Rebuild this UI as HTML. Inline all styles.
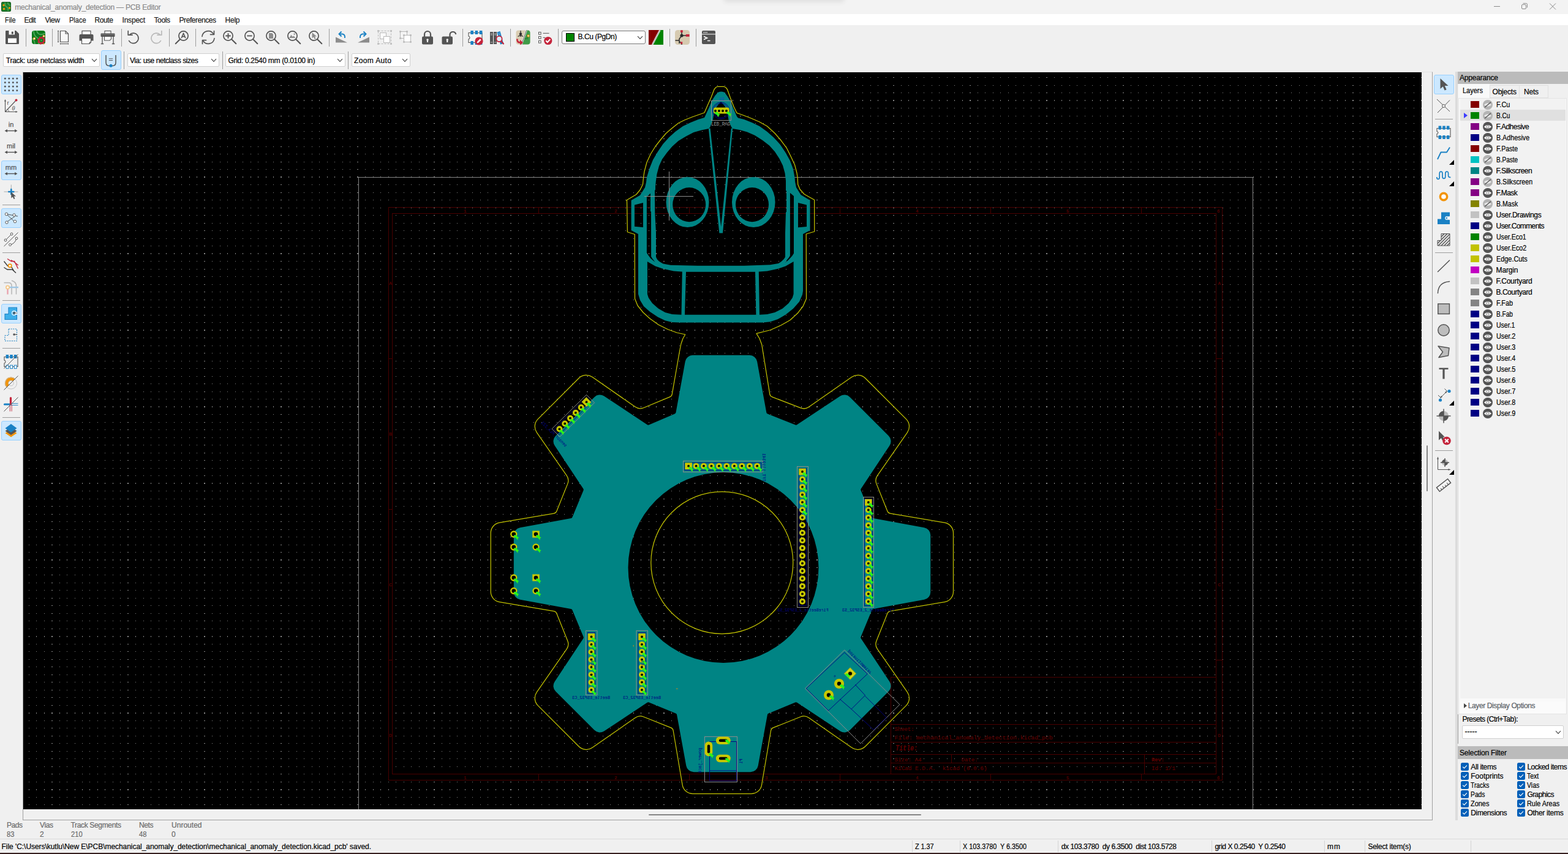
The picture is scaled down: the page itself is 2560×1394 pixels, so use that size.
<!DOCTYPE html>
<html lang="en"><head><meta charset="utf-8"><title>mechanical_anomaly_detection — PCB Editor</title>
<style>html,body{margin:0;padding:0;background:#f0f0f0}
body{width:2560px;height:1394px;overflow:hidden;position:relative;font-family:"Liberation Sans",sans-serif;font-size:12px}
.t{position:absolute;white-space:nowrap;line-height:1;height:1em;-webkit-text-stroke:0.2px}
.r,.ic,.cb,.sel{position:absolute}
.cb{background:#fff;border:1px solid #d0d0d0;border-radius:2px}
.sel{background:#cce8ff;border:1px solid #99d1ff;border-radius:3px}
svg{display:block;overflow:visible}
#cv{position:absolute;left:38px;top:118px;overflow:hidden;width:2283px;height:1203px;background:#000}
</style></head><body>
<div class="r" style="left:0px;top:0px;width:2560px;height:23px;background:#f3f3f3;"></div>
<div class="r" style="left:0px;top:23px;width:2560px;height:18px;background:#ffffff;"></div>
<div class="r" style="left:0px;top:41px;width:2560px;height:1351px;background:#f0f0f0;"></div>
<div class="r" style="left:0px;top:1391px;width:2560px;height:1px;background:#fcfdfd;"></div>
<div class="r" style="left:0px;top:1392px;width:2560px;height:1px;background:#3a2424;"></div>
<div class="r" style="left:0px;top:1393px;width:2560px;height:1px;background:#341c1c;"></div>
<div class="r" style="left:1185px;top:-12px;width:190px;height:10px;box-shadow:0 2px 8px 3px rgba(0,0,0,0.09)"></div>
<svg class="ic" style="left:2px;top:3px" width="16" height="16" viewBox="0 0 16 16"><rect x="0" y="0" width="16" height="16" rx="2.5" fill="#0f5a1a"/><rect x="1" y="1" width="14" height="14" rx="2" fill="#1b7f2a"/><path d="M6 1Q6 7 9 8.5T11 15M11 1Q10 4 15 6" fill="none" stroke="#56a95f" stroke-width="1.4"/><circle cx="4" cy="5.5" r="1.7" fill="#f2940a"/><circle cx="4.5" cy="11.5" r="1.7" fill="#f2940a"/><circle cx="13.5" cy="10" r="1.7" fill="#f2940a"/></svg>
<div class="t" style="left:24.30px;top:5.84px;font-size:12px;color:#8a8a8a;letter-spacing:-0.198px;">mechanical_anomaly_detection — PCB Editor</div>
<svg class="ic" style="left:2430px;top:0" width="130" height="23" viewBox="2430 0 130 23"><path d="M2439 10.5H2449" stroke="#8a8a8a" stroke-width="1"/><rect x="2484.5" y="7.5" width="7" height="7" rx="1.5" fill="none" stroke="#8a8a8a" stroke-width="1"/><path d="M2486.5 5.5H2491.5Q2493.5 5.5 2493.5 7.5V12.5" fill="none" stroke="#8a8a8a" stroke-width="1"/><path d="M2530 5.5L2540 15.5M2540 5.5L2530 15.5" stroke="#8a8a8a" stroke-width="1"/></svg>
<div class="t" style="left:7.50px;top:26.84px;font-size:12px;color:#1b1b1b;transform:scaleX(0.9051);transform-origin:0 0;">File</div>
<div class="t" style="left:39.50px;top:26.84px;font-size:12px;color:#1b1b1b;letter-spacing:-0.559px;">Edit</div>
<div class="t" style="left:73.50px;top:26.84px;font-size:12px;color:#1b1b1b;letter-spacing:-0.431px;">View</div>
<div class="t" style="left:112.50px;top:26.84px;font-size:12px;color:#1b1b1b;transform:scaleX(0.9161);transform-origin:0 0;">Place</div>
<div class="t" style="left:154.50px;top:26.84px;font-size:12px;color:#1b1b1b;letter-spacing:-0.380px;">Route</div>
<div class="t" style="left:199.50px;top:26.84px;font-size:12px;color:#1b1b1b;letter-spacing:-0.198px;">Inspect</div>
<div class="t" style="left:251.50px;top:26.84px;font-size:12px;color:#1b1b1b;letter-spacing:-0.378px;">Tools</div>
<div class="t" style="left:292.50px;top:26.84px;font-size:12px;color:#1b1b1b;letter-spacing:-0.420px;">Preferences</div>
<div class="t" style="left:367.50px;top:26.84px;font-size:12px;color:#1b1b1b;letter-spacing:-0.226px;">Help</div>
<svg class="ic" style="left:8px;top:49px" width="24" height="24" viewBox="0 0 24 24"><path d="M1 2.2Q1 1 2.2 1H18L23 6V21.8Q23 23 21.8 23H2.2Q1 23 1 21.8Z" fill="#545454"/><rect x="5" y="13.5" width="14" height="7.5" fill="#fff"/><rect x="6.5" y="1" width="9.5" height="6.5" fill="#fff"/><rect x="10.8" y="2.6" width="3" height="4" fill="#545454"/></svg>
<svg class="ic" style="left:51px;top:49px" width="24" height="24" viewBox="0 0 24 24"><rect x="1" y="1" width="22" height="22" rx="4" fill="#0c7a1c"/><path d="M4 1Q4 9 9 12T12 23M9 1Q10 6 14 7T23 5M1 14Q5 15 6 23" fill="none" stroke="#4da85a" stroke-width="1.8"/><circle cx="5" cy="14" r="1.8" fill="#fff" stroke="#f2940a" stroke-width="1"/><circle cx="20.5" cy="10" r="1.6" fill="#fff" stroke="#f2940a" stroke-width="1"/><circle cx="16.5" cy="17" r="4.2" fill="none" stroke="#c4243b" stroke-width="2.6"/><circle cx="16.5" cy="17" r="5.6" fill="none" stroke="#c4243b" stroke-width="2.2" stroke-dasharray="2.2 2.2"/><circle cx="16.5" cy="17" r="1.6" fill="#2ea043"/><circle cx="20.5" cy="22.5" r="1" fill="#f2940a"/></svg>
<svg class="ic" style="left:93px;top:49px" width="24" height="24" viewBox="0 0 24 24"><path d="M5.5 1.5H14L18.5 6V19.5H5.5Z" fill="#f7f7f7" stroke="#545454" stroke-width="1.2"/><path d="M14 1.5V6H18.5" fill="none" stroke="#545454" stroke-width="1.2"/><path d="M2 1.5V19.5M1 1.5H3M1 19.5H3M5.5 22.5H18.5M5.5 21.5V23.5M18.5 21.5V23.5" stroke="#545454" stroke-width="1" fill="none"/></svg>
<svg class="ic" style="left:129px;top:49px" width="24" height="24" viewBox="0 0 24 24"><rect x="5" y="1.5" width="14" height="7" fill="#fafafa" stroke="#545454" stroke-width="1.2"/><path d="M0.5 9Q0.5 7 2.5 7H21.5Q23.5 7 23.5 9V17.5H0.5Z" fill="#545454"/><path d="M4.5 13.5H19.5V20L17 22.5H4.5Z" fill="#fafafa" stroke="#545454" stroke-width="1.2"/><path d="M19.5 20H17V22.5" fill="none" stroke="#545454" stroke-width="1"/></svg>
<svg class="ic" style="left:164px;top:49px" width="24" height="24" viewBox="0 0 24 24"><rect x="7" y="1.5" width="10" height="6" fill="#fafafa" stroke="#545454" stroke-width="1.1"/><rect x="0.5" y="5.5" width="23" height="5.5" rx="1" fill="#545454"/><path d="M1 7.6H23" stroke="#8a8a8a" stroke-width="0.7"/><path d="M6.5 11V17H15L17.5 14.8V11" fill="#fafafa" stroke="#545454" stroke-width="1.1"/><path d="M3 11V22.5M21 11V22.5M0.8 22.5H5.2M18.8 22.5H23.2" stroke="#545454" stroke-width="1.3" fill="none"/></svg>
<svg class="ic" style="left:206px;top:49px" width="24" height="24" viewBox="0 0 24 24"><path d="M6.2 7.2A8.3 8.3 0 1 1 4.6 17.6" fill="none" stroke="#545454" stroke-width="1.7" stroke-linecap="round"/><path d="M3.2 1.5V8.2H10" fill="none" stroke="#545454" stroke-width="1.7" stroke-linecap="round" stroke-linejoin="round"/></svg>
<svg class="ic" style="left:243px;top:49px" width="24" height="24" viewBox="0 0 24 24"><path d="M17.8 7.2A8.3 8.3 0 1 0 19.4 17.6" fill="none" stroke="#b9b9b9" stroke-width="1.7" stroke-linecap="round"/><path d="M20.8 1.5V8.2H14" fill="none" stroke="#b9b9b9" stroke-width="1.7" stroke-linecap="round" stroke-linejoin="round"/></svg>
<svg class="ic" style="left:285px;top:49px" width="24" height="24" viewBox="0 0 24 24"><circle cx="14.5" cy="9.5" r="7.6" fill="none" stroke="#545454" stroke-width="1.7"/><path d="M9 15L1.7 22.3" stroke="#545454" stroke-width="2" stroke-linecap="round"/><path d="M11.2 13.2L14.5 5.2L17.8 13.2M12.4 10.6H16.6" fill="none" stroke="#545454" stroke-width="1.6" stroke-linejoin="round"/></svg>
<svg class="ic" style="left:328px;top:49px" width="24" height="24" viewBox="0 0 24 24"><path d="M2 10.5A10 10 0 0 1 20.5 6.5" fill="none" stroke="#545454" stroke-width="1.7" stroke-linecap="round"/><path d="M22 13.5A10 10 0 0 1 3.5 17.5" fill="none" stroke="#545454" stroke-width="1.7" stroke-linecap="round"/><path d="M21.5 1.5V7.3H15.5M2.5 22.5V16.7H8.5" fill="none" stroke="#545454" stroke-width="1.7" stroke-linecap="round" stroke-linejoin="round"/></svg>
<svg class="ic" style="left:363px;top:49px" width="24" height="24" viewBox="0 0 24 24"><circle cx="9.5" cy="9.5" r="7.6" fill="none" stroke="#545454" stroke-width="1.7"/><path d="M15 15L22.3 22.3" stroke="#545454" stroke-width="2" stroke-linecap="round"/><path d="M5.3 9.5H13.7M9.5 5.3V13.7" stroke="#545454" stroke-width="1.8"/></svg>
<svg class="ic" style="left:398px;top:49px" width="24" height="24" viewBox="0 0 24 24"><circle cx="9.5" cy="9.5" r="7.6" fill="none" stroke="#545454" stroke-width="1.7"/><path d="M15 15L22.3 22.3" stroke="#545454" stroke-width="2" stroke-linecap="round"/><path d="M5.3 9.5H13.7" stroke="#545454" stroke-width="1.8"/></svg>
<svg class="ic" style="left:433px;top:49px" width="24" height="24" viewBox="0 0 24 24"><circle cx="9.5" cy="9.5" r="7.6" fill="none" stroke="#545454" stroke-width="1.7"/><path d="M15 15L22.3 22.3" stroke="#545454" stroke-width="2" stroke-linecap="round"/><path d="M6 5H11L13 7V14H6Z" fill="#8c8c8c"/></svg>
<svg class="ic" style="left:468px;top:49px" width="24" height="24" viewBox="0 0 24 24"><circle cx="9.5" cy="9.5" r="7.6" fill="none" stroke="#545454" stroke-width="1.7"/><path d="M15 15L22.3 22.3" stroke="#545454" stroke-width="2" stroke-linecap="round"/><path d="M4 13L7.5 8L9.8 11L11.5 9.5L14.5 13Z" fill="#8c8c8c"/><circle cx="12.7" cy="6.6" r="1.2" fill="#8c8c8c"/></svg>
<svg class="ic" style="left:503px;top:49px" width="24" height="24" viewBox="0 0 24 24"><circle cx="9.5" cy="9.5" r="7.6" fill="none" stroke="#545454" stroke-width="1.7"/><path d="M15 15L22.3 22.3" stroke="#545454" stroke-width="2" stroke-linecap="round"/><path d="M6.5 4V13.5L9 11.3L10.8 15L12.6 14.2L10.9 10.6H14Z" fill="#8c8c8c"/></svg>
<svg class="ic" style="left:546px;top:49px" width="24" height="24" viewBox="0 0 24 24"><path d="M2 11.5L21 20.5H2Z" fill="#8c8c8c"/><path d="M8 6.5H13Q17.5 7 17 13" fill="none" stroke="#1a81c4" stroke-width="1.9"/><path d="M11.5 2.5L7.5 6.5L11.5 10.5" fill="none" stroke="#1a81c4" stroke-width="1.9"/></svg>
<svg class="ic" style="left:581px;top:49px" width="24" height="24" viewBox="0 0 24 24"><path d="M22 11.5L3 20.5H22Z" fill="#8c8c8c"/><path d="M16 6.5H11Q6.5 7 7 13" fill="none" stroke="#1a81c4" stroke-width="1.9"/><path d="M12.5 2.5L16.5 6.5L12.5 10.5" fill="none" stroke="#1a81c4" stroke-width="1.9"/></svg>
<svg class="ic" style="left:616px;top:49px" width="24" height="24" viewBox="0 0 24 24"><rect x="1.5" y="1.5" width="21" height="21" fill="none" stroke="#b9b9b9" stroke-width="1" stroke-dasharray="3 2"/><rect x="0.19999999999999996" y="0.19999999999999996" width="2.6" height="2.6" fill="#b9b9b9"/><rect x="21.2" y="0.19999999999999996" width="2.6" height="2.6" fill="#b9b9b9"/><rect x="0.19999999999999996" y="21.2" width="2.6" height="2.6" fill="#b9b9b9"/><rect x="21.2" y="21.2" width="2.6" height="2.6" fill="#b9b9b9"/><rect x="4.5" y="4.5" width="10" height="10" fill="#fafafa" stroke="#b9b9b9" stroke-width="1"/><rect x="10.5" y="10.5" width="10" height="10" fill="#fff" stroke="#b9b9b9" stroke-width="1"/></svg>
<svg class="ic" style="left:651px;top:49px" width="24" height="24" viewBox="0 0 24 24"><rect x="2.5" y="2.5" width="11" height="11" fill="#f4f4f4" stroke="#b9b9b9" stroke-width="1"/><rect x="1.2" y="1.2" width="2.6" height="2.6" fill="#b9b9b9"/><rect x="12.2" y="1.2" width="2.6" height="2.6" fill="#b9b9b9"/><rect x="1.2" y="12.2" width="2.6" height="2.6" fill="#b9b9b9"/><rect x="8.5" y="8.5" width="11" height="11" fill="#fff" stroke="#b9b9b9" stroke-width="1"/><rect x="7.2" y="7.2" width="2.6" height="2.6" fill="#b9b9b9"/><rect x="18.2" y="7.2" width="2.6" height="2.6" fill="#b9b9b9"/><rect x="7.2" y="18.2" width="2.6" height="2.6" fill="#b9b9b9"/><rect x="18.2" y="18.2" width="2.6" height="2.6" fill="#b9b9b9"/></svg>
<svg class="ic" style="left:686px;top:49px" width="24" height="24" viewBox="0 0 24 24"><path d="M7 11V7A5 5 0 0 1 17 7V11" fill="none" stroke="#545454" stroke-width="2.2"/><rect x="3" y="10.5" width="18" height="13" rx="2" fill="#545454"/><circle cx="12" cy="16" r="1.7" fill="#fff"/><path d="M11.2 16.5H12.8L13.2 20H10.8Z" fill="#fff"/></svg>
<svg class="ic" style="left:721px;top:49px" width="24" height="24" viewBox="0 0 24 24"><path d="M13.5 11V7A5 5 0 0 1 23.3 7" fill="none" stroke="#545454" stroke-width="2.2"/><rect x="0.5" y="10.5" width="17.5" height="13" rx="2" fill="#545454"/><circle cx="9.3" cy="16" r="1.7" fill="#fff"/><path d="M8.5 16.5H10.1L10.5 20H8.1Z" fill="#fff"/></svg>
<svg class="ic" style="left:764px;top:49px" width="24" height="24" viewBox="0 0 24 24"><path d="M1 4.5H23V20.5H1V15Q3 14.5 3 12.5T1 10Z" fill="#f6f6f6" stroke="#545454" stroke-width="1.1"/><rect x="4.3" y="1" width="4.6" height="6" fill="#1a81c4"/><rect x="4.3" y="18" width="4.6" height="6" fill="#1a81c4"/><rect x="11.6" y="1" width="4.6" height="6" fill="#1a81c4"/><rect x="11.6" y="18" width="4.6" height="6" fill="#1a81c4"/><rect x="18.799999999999997" y="1" width="4.6" height="6" fill="#1a81c4"/><rect x="18.799999999999997" y="18" width="4.6" height="6" fill="#1a81c4"/><circle cx="18" cy="18" r="6.6" fill="#c4243b"/><path d="M14.5 21.5L15.3 18.8L19.8 14.3L21.7 16.2L17.2 20.7Z" fill="#fff"/></svg>
<svg class="ic" style="left:799px;top:49px" width="24" height="24" viewBox="0 0 24 24"><rect x="1" y="3" width="5" height="20" fill="#545454"/><rect x="7" y="3" width="5" height="20" fill="#545454"/><path d="M2 6H5M2 8H5M8 6H11M8 8H11M2 20H5M8 20H11" stroke="#d0d0d0" stroke-width="0.8"/><path d="M12.5 3.5L17.5 2L23 22L18 23.5Z" fill="#1a81c4"/><path d="M14.5 5.5L17 4.8M15 8L17.6 7.3" stroke="#9cc9ea" stroke-width="0.9"/><circle cx="16" cy="14.5" r="4.6" fill="#dfeffa" stroke="#c4243b" stroke-width="1.8"/><path d="M19.5 18.5L23 22.5" stroke="#c4243b" stroke-width="2.2" stroke-linecap="round"/></svg>
<svg class="ic" style="left:842px;top:49px" width="24" height="24" viewBox="0 0 24 24"><rect x="0.5" y="0.5" width="23" height="23" rx="4" fill="#d9cdb2"/><path d="M17.5 0.5H19.5Q23.5 0.5 23.5 4.5V19.5Q23.5 23.5 19.5 23.5H9.5Z" fill="#3f9b48"/><path d="M14 14H19V8" fill="none" stroke="#2b7d33" stroke-width="1.5"/><path d="M17.5 0.5L9.5 23.5" stroke="#fff" stroke-width="2.4"/><path d="M17.5 0.5L9.5 23.5" stroke="#333" stroke-width="0.9"/><circle cx="8" cy="6.5" r="2.2" fill="#2e2e2e"/><path d="M8 1V11M3.5 10.5L8 8.5L12 10.5" fill="none" stroke="#2e2e2e" stroke-width="1.3"/><circle cx="20.5" cy="9.5" r="1.6" fill="#fff" stroke="#f2940a" stroke-width="1.2"/><path d="M2.5 14.5Q1.5 20.5 8 20.5" fill="none" stroke="#c4243b" stroke-width="2.6"/><path d="M7 16L12 20.5L7 24.5Z" fill="#c4243b"/></svg>
<svg class="ic" style="left:878px;top:49px" width="24" height="24" viewBox="0 0 24 24"><rect x="1.5" y="3.5" width="3.6" height="3.6" fill="#fff" stroke="#545454" stroke-width="1"/><rect x="1.5" y="10.5" width="3.6" height="3.6" fill="#fff" stroke="#545454" stroke-width="1"/><rect x="1.5" y="17.5" width="3.6" height="3.6" fill="#fff" stroke="#545454" stroke-width="1"/><path d="M8.5 5.3H18.5M8.5 12.3H12" stroke="#545454" stroke-width="1"/><circle cx="16.8" cy="17.5" r="6.6" fill="#c4243b"/><path d="M13.2 17.3L15.8 20L20.3 15" fill="none" stroke="#fff" stroke-width="2"/></svg>
<svg class="ic" style="left:1059px;top:49px" width="24" height="24" viewBox="0 0 24 24"><rect x="0" y="0" width="24" height="24" fill="#840000"/><path d="M19 0H24V24H7Z" fill="#008400"/><path d="M18.5 0L6 24" stroke="#fff" stroke-width="2.6"/><path d="M18.5 0L6 24" stroke="#222" stroke-width="0.9" stroke-dasharray="1.5 1"/></svg>
<svg class="ic" style="left:1102px;top:49px" width="24" height="24" viewBox="0 0 24 24"><rect x="0" y="0" width="24" height="24" rx="4.5" fill="#d6cab0"/><circle cx="11" cy="9" r="2.6" fill="#2b2b2b"/><path d="M11 2V10.5M11 9H20M10.5 10L7 14.5V22M0.5 17H7M7 18.5L11 22V24" fill="none" stroke="#2b2b2b" stroke-width="1.5"/><rect x="9" y="0.3" width="3.8" height="3.6" fill="#c4243b"/><rect x="17.8" y="7" width="5.8" height="3.8" fill="#c4243b"/><rect x="9.2" y="19.3" width="3" height="3.4" fill="#c4243b"/></svg>
<svg class="ic" style="left:1145px;top:49px" width="24" height="24" viewBox="0 0 24 24"><rect x="1" y="1" width="22" height="22" rx="2" fill="#545454"/><path d="M1 6.8H23" stroke="#fff" stroke-width="1"/><path d="M3.5 3.8H10.5" stroke="#fff" stroke-width="1.3" stroke-dasharray="1.6 0.8"/><path d="M4 10.5L9.5 13L4 15.5" fill="none" stroke="#fff" stroke-width="1.6"/><path d="M10 17.5H14.5" stroke="#fff" stroke-width="1.5"/></svg>
<div class="r" style="left:42.0px;top:47px;width:1px;height:29px;background:#9d9d9d"></div>
<div class="r" style="left:85.0px;top:47px;width:1px;height:29px;background:#9d9d9d"></div>
<div class="r" style="left:198.0px;top:47px;width:1px;height:29px;background:#9d9d9d"></div>
<div class="r" style="left:276.0px;top:47px;width:1px;height:29px;background:#9d9d9d"></div>
<div class="r" style="left:319.0px;top:47px;width:1px;height:29px;background:#9d9d9d"></div>
<div class="r" style="left:537.0px;top:47px;width:1px;height:29px;background:#9d9d9d"></div>
<div class="r" style="left:755.0px;top:47px;width:1px;height:29px;background:#9d9d9d"></div>
<div class="r" style="left:832.5px;top:47px;width:1px;height:29px;background:#9d9d9d"></div>
<div class="r" style="left:911.0px;top:47px;width:1px;height:29px;background:#9d9d9d"></div>
<div class="r" style="left:1093.0px;top:47px;width:1px;height:29px;background:#9d9d9d"></div>
<div class="r" style="left:1136.0px;top:47px;width:1px;height:29px;background:#9d9d9d"></div>
<div class="cb" style="left:917px;top:50px;width:135px;height:20px;border-color:#7a7a7a;border-radius:3px"></div>
<div class="r" style="left:924px;top:54px;width:14px;height:14px;background:#008400;border:1px solid #000;box-sizing:border-box"></div>
<div class="t" style="left:943.50px;top:54.04px;font-size:12px;color:#000;letter-spacing:-0.422px;">B.Cu (PgDn)</div>
<svg class="ic" style="left:1040px;top:58.0px" width="10" height="7" viewBox="0 0 10 7"><path d="M1 1.2L5 5.4L9 1.2" fill="none" stroke="#444" stroke-width="1.1"/></svg>
<div class="cb" style="left:5px;top:87px;width:155.5px;height:20px;border-color:#d0d0d0"></div><div class="t" style="left:9.80px;top:92.94px;font-size:12px;color:#000;letter-spacing:-0.274px;">Track: use netclass width</div><svg class="ic" style="left:148.8px;top:95.0px" width="10" height="7" viewBox="0 0 10 7"><path d="M1 1.2L5 5.4L9 1.2" fill="none" stroke="#444" stroke-width="1.1"/></svg>
<div class="sel" style="left:165px;top:82px;width:31px;height:30px"></div>
<svg class="ic" style="left:169px;top:86px" width="24" height="24" viewBox="0 0 24 24"><path d="M4 4V16Q4 21.5 9.5 21.5H14.5Q20 21.5 20 16V4" fill="none" stroke="#545454" stroke-width="1.5"/><path d="M8.8 9.8H15.2M8.8 12.6H15.2" stroke="#545454" stroke-width="1"/><circle cx="12" cy="21.3" r="2.5" fill="#1a81c4"/></svg>
<div class="r" style="left:202.0px;top:84px;width:1px;height:29px;background:#9d9d9d"></div>
<div class="cb" style="left:208px;top:87px;width:147.5px;height:20px;border-color:#d0d0d0"></div><div class="t" style="left:212.00px;top:92.94px;font-size:12px;color:#000;letter-spacing:-0.426px;">Via: use netclass sizes</div><svg class="ic" style="left:344px;top:95.0px" width="10" height="7" viewBox="0 0 10 7"><path d="M1 1.2L5 5.4L9 1.2" fill="none" stroke="#444" stroke-width="1.1"/></svg>
<div class="r" style="left:362.5px;top:84px;width:1px;height:29px;background:#9d9d9d"></div>
<div class="cb" style="left:368px;top:87px;width:194px;height:20px;border-color:#d0d0d0"></div><div class="t" style="left:372.50px;top:92.94px;font-size:12px;color:#000;letter-spacing:-0.314px;">Grid: 0.2540 mm (0.0100 in)</div><svg class="ic" style="left:550px;top:95.0px" width="10" height="7" viewBox="0 0 10 7"><path d="M1 1.2L5 5.4L9 1.2" fill="none" stroke="#444" stroke-width="1.1"/></svg>
<div class="r" style="left:568.0px;top:84px;width:1px;height:29px;background:#9d9d9d"></div>
<div class="cb" style="left:574px;top:87px;width:93.5px;height:20px;border-color:#d0d0d0"></div><div class="t" style="left:578.00px;top:92.94px;font-size:12px;color:#000;letter-spacing:0.371px;">Zoom Auto</div><svg class="ic" style="left:655.5px;top:95.0px" width="10" height="7" viewBox="0 0 10 7"><path d="M1 1.2L5 5.4L9 1.2" fill="none" stroke="#444" stroke-width="1.1"/></svg>
<div class="r" style="left:37px;top:117px;width:2302px;height:1222px;background:#f0f0f0;border:1px solid #a0a0a0;box-sizing:border-box;border-top-color:#e3e3e3;border-left-color:#a0a0a0"></div>
<div class="r" style="left:1059px;top:1329px;width:445px;height:2px;background:#858585;border-radius:1px"></div>
<div class="r" style="left:2329px;top:727px;width:2px;height:75px;background:#858585;border-radius:1px"></div>
<div class="sel" style="left:2px;top:122px;width:31px;height:30px"></div>
<svg class="ic" style="left:6px;top:126px" width="24" height="24" viewBox="0 0 24 24"><circle cx="2.3" cy="2.3" r="1.45" fill="#545454"/><circle cx="2.3" cy="8.8" r="1.45" fill="#545454"/><circle cx="2.3" cy="15.3" r="1.45" fill="#545454"/><circle cx="2.3" cy="21.8" r="1.45" fill="#545454"/><circle cx="8.8" cy="2.3" r="1.45" fill="#545454"/><circle cx="8.8" cy="8.8" r="1.45" fill="#545454"/><circle cx="8.8" cy="15.3" r="1.45" fill="#545454"/><circle cx="8.8" cy="21.8" r="1.45" fill="#545454"/><circle cx="15.3" cy="2.3" r="1.45" fill="#545454"/><circle cx="15.3" cy="8.8" r="1.45" fill="#545454"/><circle cx="15.3" cy="15.3" r="1.45" fill="#545454"/><circle cx="15.3" cy="21.8" r="1.45" fill="#545454"/><circle cx="21.8" cy="2.3" r="1.45" fill="#545454"/><circle cx="21.8" cy="8.8" r="1.45" fill="#545454"/><circle cx="21.8" cy="15.3" r="1.45" fill="#545454"/><circle cx="21.8" cy="21.8" r="1.45" fill="#545454"/></svg>
<svg class="ic" style="left:6px;top:161px" width="24" height="24" viewBox="0 0 24 24"><path d="M2.5 2V21.5H22" fill="none" stroke="#545454" stroke-width="1.1"/><path d="M2.5 1L1 4.5H4ZM23 21.5L19.5 20V23Z" fill="#545454"/><path d="M2.5 21.5L19.5 3.5" stroke="#545454" stroke-width="1.1"/><path d="M6.5 17.5Q8.5 19 8.5 21.5" fill="none" stroke="#545454" stroke-width="0.8"/><circle cx="20.5" cy="2.5" r="2" fill="#c4243b"/><text x="5.6" y="9.5" font-family="Liberation Sans,sans-serif" font-size="9.5" fill="#545454">r</text><text x="13.5" y="18.5" font-family="Liberation Sans,sans-serif" font-size="9" font-style="italic" fill="#545454">θ</text></svg>
<svg class="ic" style="left:6px;top:196px" width="24" height="24" viewBox="0 0 24 24"><text x="12" y="10.5" text-anchor="middle" font-family="Liberation Sans,sans-serif" font-size="11" fill="#545454" stroke="#545454" stroke-width="0.25">in</text><path d="M3 17.5H21" stroke="#545454" stroke-width="1.4"/><path d="M1.5 17.5L6 15V20ZM22.5 17.5L18 15V20Z" fill="#545454"/></svg>
<svg class="ic" style="left:6px;top:231px" width="24" height="24" viewBox="0 0 24 24"><text x="12" y="10.5" text-anchor="middle" font-family="Liberation Sans,sans-serif" font-size="11" fill="#545454" stroke="#545454" stroke-width="0.25">mil</text><path d="M3 17.5H21" stroke="#545454" stroke-width="1.4"/><path d="M1.5 17.5L6 15V20ZM22.5 17.5L18 15V20Z" fill="#545454"/></svg>
<div class="sel" style="left:2px;top:262px;width:31px;height:30px"></div>
<svg class="ic" style="left:6px;top:266px" width="24" height="24" viewBox="0 0 24 24"><text x="12" y="10.5" text-anchor="middle" font-family="Liberation Sans,sans-serif" font-size="11" fill="#545454" stroke="#545454" stroke-width="0.25">mm</text><path d="M3 17.5H21" stroke="#545454" stroke-width="1.4"/><path d="M1.5 17.5L6 15V20ZM22.5 17.5L18 15V20Z" fill="#545454"/></svg>
<svg class="ic" style="left:6px;top:301px" width="24" height="24" viewBox="0 0 24 24"><path d="M12.3 0.5V9M0.5 12H9M15.5 12H23.5" stroke="#9a9a9a" stroke-width="0.8"/><path d="M12.3 8V16M8.3 12H16.3" stroke="#1a81c4" stroke-width="2.6" stroke-linecap="round"/><path d="M12.3 12.5V22.5L14.8 20.2L16.6 24L18.4 23.2L16.7 19.5H20Z" fill="#545454"/></svg>
<div class="sel" style="left:2px;top:340px;width:31px;height:30px"></div>
<svg class="ic" style="left:6px;top:343.5px" width="24" height="24" viewBox="0 0 24 24"><path d="M4.5 5.5L19 19M4 19L18 9.5M4.5 5.5L23 9" fill="none" stroke="#545454" stroke-width="1"/><circle cx="4.5" cy="5.5" r="2.2" fill="#fff" stroke="#545454" stroke-width="1"/><circle cx="17" cy="7" r="2.2" fill="#fff" stroke="#545454" stroke-width="1"/><circle cx="5" cy="19" r="2.2" fill="#fff" stroke="#545454" stroke-width="1"/><circle cx="18.5" cy="17.5" r="2.2" fill="#fff" stroke="#545454" stroke-width="1"/></svg>
<svg class="ic" style="left:6px;top:378.5px" width="24" height="24" viewBox="0 0 24 24"><path d="M0.5 23L23.5 0.5" stroke="#545454" stroke-width="1"/><path d="M3 13L13 3M10.5 20.5Q18.5 19 21 10" fill="none" stroke="#545454" stroke-width="1"/><circle cx="3" cy="13" r="1.9" fill="#fff" stroke="#545454" stroke-width="1"/><circle cx="13" cy="3" r="1.9" fill="#fff" stroke="#545454" stroke-width="1"/><circle cx="10.5" cy="20.5" r="1.9" fill="#fff" stroke="#545454" stroke-width="1"/><circle cx="21" cy="10" r="1.9" fill="#fff" stroke="#545454" stroke-width="1"/></svg>
<svg class="ic" style="left:6px;top:422px" width="24" height="24" viewBox="0 0 24 24"><path d="M6 0.5L12.5 4.5H17.5L23.5 16.5M12 2.5L17 5.5L23.8 11" fill="none" stroke="#c4243b" stroke-width="1.4"/><path d="M0.5 4.5L6.5 12H11.5L17.5 21.5M0.5 14.5L6 18H14L20 23.5" fill="none" stroke="#3a3a3a" stroke-width="1.4"/><circle cx="10.2" cy="11.8" r="2.6" fill="#fff" stroke="#f2940a" stroke-width="1.7"/></svg>
<svg class="ic" style="left:6px;top:457px" width="24" height="24" viewBox="0 0 24 24"><path d="M0.5 4.5H8Q13 4.5 13 9.5V23.5M13 1Q20.5 3 20.5 10V23.5" fill="none" stroke="#b5b5b5" stroke-width="1.5"/><path d="M7 12H24" stroke="#9fc6e4" stroke-width="2.4"/><path d="M6.5 13V23.5" stroke="#e8a3ae" stroke-width="2.4"/><circle cx="6.5" cy="12" r="2.6" fill="#fff" stroke="#f6c886" stroke-width="1.7"/></svg>
<div class="sel" style="left:2px;top:496px;width:31px;height:30px"></div>
<svg class="ic" style="left:6px;top:500px" width="24" height="24" viewBox="0 0 24 24"><path d="M8 2H21.5V8.5Q17 8.3 16.7 11.5Q17 14.7 21.5 14.5V21.5H2V12.5H8Z" fill="#3daee9" stroke="#1a81c4" stroke-width="1.1"/><circle cx="17" cy="11" r="1.8" fill="#545454"/><path d="M17 11H22" stroke="#545454" stroke-width="1.6"/><circle cx="17" cy="11" r="3.4" fill="none" stroke="#fff" stroke-width="1.1"/></svg>
<svg class="ic" style="left:6px;top:535px" width="24" height="24" viewBox="0 0 24 24"><path d="M8 2H21.5V21.5H2V12.5H8Z" fill="none" stroke="#1a81c4" stroke-width="1.1" stroke-dasharray="2 1.6"/><circle cx="17" cy="11" r="1.7" fill="#545454"/><path d="M17 11H22" stroke="#545454" stroke-width="1.3"/></svg>
<svg class="ic" style="left:6px;top:578px" width="24" height="24" viewBox="0 0 24 24"><path d="M1 4.5H23V20.5H1V15Q3 14.5 3 12.5T1 10Z" fill="none" stroke="#545454" stroke-width="1.1"/><rect x="3.6" y="1" width="4.6" height="6" fill="#1a81c4"/><rect x="4.1" y="18.2" width="3.8" height="5.4" fill="#fff" stroke="#1a81c4" stroke-width="1"/><rect x="10.2" y="1" width="4.6" height="6" fill="#1a81c4"/><rect x="10.7" y="18.2" width="3.8" height="5.4" fill="#fff" stroke="#1a81c4" stroke-width="1"/><rect x="16.8" y="1" width="4.6" height="6" fill="#1a81c4"/><rect x="17.3" y="18.2" width="3.8" height="5.4" fill="#fff" stroke="#1a81c4" stroke-width="1"/><path d="M0.5 23.5L23.5 0.5" stroke="#545454" stroke-width="1"/></svg>
<svg class="ic" style="left:6px;top:613px" width="24" height="24" viewBox="0 0 24 24"><path d="M12 2.5A10 10 0 0 0 4.9 19.6L9 15.5A4.2 4.2 0 0 1 12 8.3A4.2 4.2 0 0 1 15 9.5L19.1 5.4A10 10 0 0 0 12 2.5Z" fill="#f2940a"/><circle cx="12" cy="12.5" r="9.5" fill="none" stroke="#bdbdbd" stroke-width="0.9"/><circle cx="12" cy="12.5" r="4.3" fill="none" stroke="#bdbdbd" stroke-width="0.9"/><path d="M0.5 23.5L23.5 0.5" stroke="#545454" stroke-width="1"/></svg>
<svg class="ic" style="left:6px;top:648px" width="24" height="24" viewBox="0 0 24 24"><path d="M1.5 12H11" stroke="#1a81c4" stroke-width="3.2" stroke-linecap="round"/><path d="M11.5 1.5V11" stroke="#c4243b" stroke-width="3.2" stroke-linecap="round"/><path d="M12 10.6H23.5M12 13.4H23.5" stroke="#1a81c4" stroke-width="0.9"/><path d="M10.3 12V23.5M13.1 12V23.5" stroke="#c4243b" stroke-width="0.9"/><path d="M0.5 23.5L23.5 0.5" stroke="#545454" stroke-width="1"/></svg>
<div class="sel" style="left:2px;top:687px;width:31px;height:30px"></div>
<svg class="ic" style="left:6px;top:691px" width="24" height="24" viewBox="0 0 24 24"><path d="M12 9.5L21.5 16L12 22.5L2.5 16Z" fill="#f2940a"/><path d="M12 6L21.5 12.5L12 19L2.5 12.5Z" fill="#545454"/><path d="M12 1L21.5 8L12 15L2.5 8Z" fill="#1a81c4"/></svg>
<div class="r" style="left:4px;top:333.5px;width:29px;height:1px;background:#9d9d9d"></div>
<div class="r" style="left:4px;top:411.5px;width:29px;height:1px;background:#9d9d9d"></div>
<div class="r" style="left:4px;top:490.0px;width:29px;height:1px;background:#9d9d9d"></div>
<div class="r" style="left:4px;top:567.5px;width:29px;height:1px;background:#9d9d9d"></div>
<div class="r" style="left:4px;top:680.5px;width:29px;height:1px;background:#9d9d9d"></div>
<div class="sel" style="left:2341px;top:122px;width:31px;height:30px"></div>
<svg class="ic" style="left:2345px;top:126px" width="24" height="24" viewBox="0 0 24 24"><path d="M6.5 2V19L10.8 15.2L13.6 21.6L16.6 20.3L13.8 14H19.5Z" fill="#545454"/></svg>
<svg class="ic" style="left:2345px;top:161px" width="24" height="24" viewBox="0 0 24 24"><path d="M1 1L22 21M22 2.5L2 23" stroke="#545454" stroke-width="1"/><circle cx="12" cy="12" r="2.4" fill="#fff" stroke="#545454" stroke-width="1"/></svg>
<svg class="ic" style="left:2345px;top:204px" width="24" height="24" viewBox="0 0 24 24"><path d="M1 5.5H23V19.5H1V14.5Q3 14 3 12.5T1 10.5Z" fill="#f6f6f6" stroke="#545454" stroke-width="1.1"/><rect x="3.6" y="1.5" width="4.6" height="6" fill="#1a81c4"/><rect x="3.6" y="17" width="4.6" height="6" fill="#1a81c4"/><rect x="10.2" y="1.5" width="4.6" height="6" fill="#1a81c4"/><rect x="10.2" y="17" width="4.6" height="6" fill="#1a81c4"/><rect x="16.8" y="1.5" width="4.6" height="6" fill="#1a81c4"/><rect x="16.8" y="17" width="4.6" height="6" fill="#1a81c4"/></svg>
<svg class="ic" style="left:2345px;top:239px" width="24" height="24" viewBox="0 0 24 24"><path d="M2 21L7.5 9.5H17L22 1.5" fill="none" stroke="#1a81c4" stroke-width="1.9" stroke-linejoin="round"/></svg>
<svg class="ic" style="left:2345px;top:274px" width="24" height="24" viewBox="0 0 24 24"><path d="M0.8 15Q0.8 18.5 3 18.5T5.2 15V9.5Q5.2 6 7.6 6T10 9.5V14Q10 17.5 12.4 17.5T14.8 14V9.5Q14.8 6 17.2 6T19.6 9.5V13Q19.6 15.5 23.5 15.5" fill="none" stroke="#1a81c4" stroke-width="1.7"/></svg>
<svg class="ic" style="left:2345px;top:309px" width="24" height="24" viewBox="0 0 24 24"><circle cx="12" cy="12" r="5.6" fill="#fff" stroke="#f2940a" stroke-width="3.6"/></svg>
<svg class="ic" style="left:2345px;top:344px" width="24" height="24" viewBox="0 0 24 24"><path d="M8 2.5H22V9Q17.5 8.8 17.2 12Q17.5 15.2 22 15V22H2V13.5H8Z" fill="#1a81c4"/><circle cx="17.2" cy="12" r="2.3" fill="#1a81c4" stroke="#fff" stroke-width="1.3"/><path d="M17.2 12H22.5" stroke="#fff" stroke-width="1.4"/></svg>
<svg class="ic" style="left:2345px;top:379px" width="24" height="24" viewBox="0 0 24 24"><defs><pattern id="hat" width="3.4" height="3.4" patternUnits="userSpaceOnUse" patternTransform="rotate(-45)"><rect width="3.4" height="1.5" fill="#545454"/></pattern></defs><path d="M8 2.5H22V22H2V13.5H8Z" fill="url(#hat)" stroke="#545454" stroke-width="1"/></svg>
<svg class="ic" style="left:2345px;top:422px" width="24" height="24" viewBox="0 0 24 24"><path d="M2.5 21.5L21.5 3" stroke="#545454" stroke-width="1.5" stroke-linecap="round"/></svg>
<svg class="ic" style="left:2345px;top:457px" width="24" height="24" viewBox="0 0 24 24"><path d="M2.5 21.5Q3 4 21.5 2.5" fill="none" stroke="#545454" stroke-width="1.5" stroke-linecap="round"/></svg>
<svg class="ic" style="left:2345px;top:492px" width="24" height="24" viewBox="0 0 24 24"><rect x="2.8" y="4" width="18.6" height="16.4" fill="#bdbdbd" stroke="#545454" stroke-width="1.5"/></svg>
<svg class="ic" style="left:2345px;top:527px" width="24" height="24" viewBox="0 0 24 24"><circle cx="12" cy="12" r="9.2" fill="#bdbdbd" stroke="#545454" stroke-width="1.5"/></svg>
<svg class="ic" style="left:2345px;top:562px" width="24" height="24" viewBox="0 0 24 24"><path d="M3 3L21 6L19.5 18.5L4 21.5L10.5 12.5Z" fill="#bdbdbd" stroke="#545454" stroke-width="1.5" stroke-linejoin="round"/></svg>
<svg class="ic" style="left:2345px;top:597px" width="24" height="24" viewBox="0 0 24 24"><path d="M4.5 3.5H19.5V6H13.6V21.5H10.4V6H4.5Z" fill="#545454"/></svg>
<svg class="ic" style="left:2345px;top:632px" width="24" height="24" viewBox="0 0 24 24"><path d="M7 17L17 7M3 13L7.5 17.5M13.5 2.5L18 7" stroke="#545454" stroke-width="1" fill="none"/><path d="M6 18L10 16L8 14ZM18 6L14 8L16 10Z" fill="#545454"/><circle cx="6.5" cy="21" r="2.6" fill="#1a81c4"/><circle cx="21" cy="6.5" r="2.6" fill="#1a81c4"/></svg>
<svg class="ic" style="left:2345px;top:667px" width="24" height="24" viewBox="0 0 24 24"><circle cx="12" cy="12" r="8" fill="#bdbdbd"/><path d="M12 12V4A8 8 0 0 0 4 12ZM12 12V20A8 8 0 0 0 20 12Z" fill="#545454"/><path d="M12 0.5V23.5M0.5 12H23.5" stroke="#545454" stroke-width="1.5"/></svg>
<svg class="ic" style="left:2345px;top:703px" width="24" height="24" viewBox="0 0 24 24"><path d="M4 0.5V15.5L8 12L10 16L13 14.5L11 10.5H14Z" fill="#545454"/><circle cx="17" cy="16.5" r="6.8" fill="#c4243b"/><path d="M14.2 13.7L19.8 19.3M19.8 13.7L14.2 19.3" stroke="#fff" stroke-width="2.1"/></svg>
<svg class="ic" style="left:2345px;top:745px" width="24" height="24" viewBox="0 0 24 24"><path d="M2.5 1.5V21.5H22.5" fill="none" stroke="#545454" stroke-width="1"/><path d="M2.5 0.5L1 4.5H4ZM23.5 21.5L19.5 20V23Z" fill="#545454"/><circle cx="14" cy="10" r="5" fill="#bdbdbd"/><path d="M14 10V5A5 5 0 0 0 9 10ZM14 10V15A5 5 0 0 0 19 10Z" fill="#545454"/><path d="M14 3V17M7 10H21" stroke="#545454" stroke-width="1.5"/></svg>
<svg class="ic" style="left:2345px;top:780px" width="24" height="24" viewBox="0 0 24 24"><g transform="rotate(-38 12 12)"><rect x="0.5" y="8" width="23" height="8" fill="#f6f6f6" stroke="#545454" stroke-width="1.5"/><path d="M5 16V13M9.5 16V12M14 16V13M18.5 16V12" stroke="#545454" stroke-width="1.1"/></g></svg>
<div class="r" style="left:2343px;top:194.0px;width:29px;height:1px;background:#9d9d9d"></div>
<div class="r" style="left:2343px;top:411.5px;width:29px;height:1px;background:#9d9d9d"></div>
<div class="r" style="left:2343px;top:734.5px;width:29px;height:1px;background:#9d9d9d"></div>
<svg class="ic" style="left:2366px;top:261px" width="8" height="8" viewBox="0 0 8 8"><path d="M8 0V8H0Z" fill="#000"/></svg>
<svg class="ic" style="left:2366px;top:296px" width="8" height="8" viewBox="0 0 8 8"><path d="M8 0V8H0Z" fill="#000"/></svg>
<svg class="ic" style="left:2366px;top:654px" width="8" height="8" viewBox="0 0 8 8"><path d="M8 0V8H0Z" fill="#000"/></svg>
<svg class="ic" style="left:2366px;top:767px" width="8" height="8" viewBox="0 0 8 8"><path d="M8 0V8H0Z" fill="#000"/></svg>
<div class="r" style="left:2376px;top:117px;width:4px;height:1222px;background:#dcdcdc;"></div>
<div class="r" style="left:2380px;top:117px;width:180px;height:20px;background:#bbbbbb;"></div>
<div class="t" style="left:2383.00px;top:120.94px;font-size:12px;color:#000;letter-spacing:-0.191px;">Appearance</div>
<div class="r" style="left:2380px;top:137px;width:180px;height:1081px;background:#f0f0f0;"></div>
<div class="r" style="left:2381px;top:137px;width:51px;height:24px;background:#f9f9f9;"></div>
<div class="r" style="left:2432px;top:139px;width:49px;height:21px;background:#f0f0f0;border:1px solid #e0e0e0;box-sizing:border-box"></div>
<div class="r" style="left:2481px;top:139px;width:47px;height:21px;background:#f0f0f0;border:1px solid #e0e0e0;box-sizing:border-box;border-left:none"></div>
<div class="t" style="left:2388.00px;top:141.84px;font-size:12px;color:#000;transform:scaleX(0.9162);transform-origin:0 0;">Layers</div>
<div class="t" style="left:2436.50px;top:143.64px;font-size:12px;color:#000;letter-spacing:-0.197px;">Objects</div>
<div class="t" style="left:2488.00px;top:143.64px;font-size:12px;color:#000;letter-spacing:-0.224px;">Nets</div>
<div class="r" style="left:2381px;top:160px;width:177px;height:1006px;background:#f9f9f9;border:1px solid #e4e4e4;box-sizing:border-box;border-top:1px solid #e4e4e4"></div>
<div class="r" style="left:2384px;top:161px;width:172px;height:979px;background:#f2f2f2;"></div>
<div class="r" style="left:2384px;top:179px;width:172px;height:18px;background:#e0e0e0;"></div>
<svg class="ic" style="left:2389.5px;top:183.5px" width="6" height="9" viewBox="0 0 6 9"><path d="M0 0L6 4.5L0 9Z" fill="#3c3cff"/></svg>
<div class="r" style="left:2401px;top:165px;width:14px;height:11px;background:#840000;"></div>
<svg class="ic" style="left:2421px;top:163.0px" width="16" height="16" viewBox="0 0 16 16"><circle cx="8" cy="8" r="8" fill="#b4b4b4"/><path d="M1.8 8Q8 2.6 14.2 8Q8 13.4 1.8 8Z" fill="#e9e9e9"/><path d="M3 12.2L13 3.8" stroke="#5a5a5a" stroke-width="1.5"/></svg>
<div class="t" style="left:2442.60px;top:165.44px;font-size:12px;color:#000;transform:scaleX(0.8998);transform-origin:0 0;">F.Cu</div>
<div class="r" style="left:2401px;top:183px;width:14px;height:11px;background:#008400;"></div>
<svg class="ic" style="left:2421px;top:181.0px" width="16" height="16" viewBox="0 0 16 16"><circle cx="8" cy="8" r="8" fill="#b4b4b4"/><path d="M1.8 8Q8 2.6 14.2 8Q8 13.4 1.8 8Z" fill="#e9e9e9"/><path d="M3 12.2L13 3.8" stroke="#5a5a5a" stroke-width="1.5"/></svg>
<div class="t" style="left:2442.60px;top:183.44px;font-size:12px;color:#000;transform:scaleX(0.8321);transform-origin:0 0;">B.Cu</div>
<div class="r" style="left:2401px;top:201px;width:14px;height:11px;background:#840084;"></div>
<svg class="ic" style="left:2421px;top:199.0px" width="16" height="16" viewBox="0 0 16 16"><circle cx="8" cy="8" r="8" fill="#545454"/><path d="M1.8 8Q8 2.2 14.2 8Q8 13.8 1.8 8Z" fill="#fff"/><circle cx="8" cy="8" r="2.1" fill="none" stroke="#7a7a7a" stroke-width="1"/></svg>
<div class="t" style="left:2442.60px;top:201.44px;font-size:12px;color:#000;letter-spacing:-0.511px;">F.Adhesive</div>
<div class="r" style="left:2401px;top:219px;width:14px;height:11px;background:#000084;"></div>
<svg class="ic" style="left:2421px;top:217.0px" width="16" height="16" viewBox="0 0 16 16"><circle cx="8" cy="8" r="8" fill="#545454"/><path d="M1.8 8Q8 2.2 14.2 8Q8 13.8 1.8 8Z" fill="#fff"/><circle cx="8" cy="8" r="2.1" fill="none" stroke="#7a7a7a" stroke-width="1"/></svg>
<div class="t" style="left:2442.60px;top:219.44px;font-size:12px;color:#000;transform:scaleX(0.8912);transform-origin:0 0;">B.Adhesive</div>
<div class="r" style="left:2401px;top:237px;width:14px;height:11px;background:#840000;"></div>
<svg class="ic" style="left:2421px;top:235.0px" width="16" height="16" viewBox="0 0 16 16"><circle cx="8" cy="8" r="8" fill="#545454"/><path d="M1.8 8Q8 2.2 14.2 8Q8 13.8 1.8 8Z" fill="#fff"/><circle cx="8" cy="8" r="2.1" fill="none" stroke="#7a7a7a" stroke-width="1"/></svg>
<div class="t" style="left:2442.60px;top:237.44px;font-size:12px;color:#000;transform:scaleX(0.8771);transform-origin:0 0;">F.Paste</div>
<div class="r" style="left:2401px;top:255px;width:14px;height:11px;background:#00c2c2;"></div>
<svg class="ic" style="left:2421px;top:253.0px" width="16" height="16" viewBox="0 0 16 16"><circle cx="8" cy="8" r="8" fill="#b4b4b4"/><path d="M1.8 8Q8 2.6 14.2 8Q8 13.4 1.8 8Z" fill="#e9e9e9"/><path d="M3 12.2L13 3.8" stroke="#5a5a5a" stroke-width="1.5"/></svg>
<div class="t" style="left:2442.60px;top:255.44px;font-size:12px;color:#000;transform:scaleX(0.8352);transform-origin:0 0;">B.Paste</div>
<div class="r" style="left:2401px;top:273px;width:14px;height:11px;background:#008484;"></div>
<svg class="ic" style="left:2421px;top:271.0px" width="16" height="16" viewBox="0 0 16 16"><circle cx="8" cy="8" r="8" fill="#545454"/><path d="M1.8 8Q8 2.2 14.2 8Q8 13.8 1.8 8Z" fill="#fff"/><circle cx="8" cy="8" r="2.1" fill="none" stroke="#7a7a7a" stroke-width="1"/></svg>
<div class="t" style="left:2442.60px;top:273.44px;font-size:12px;color:#000;letter-spacing:-0.508px;">F.Silkscreen</div>
<div class="r" style="left:2401px;top:291px;width:14px;height:11px;background:#840084;"></div>
<svg class="ic" style="left:2421px;top:289.0px" width="16" height="16" viewBox="0 0 16 16"><circle cx="8" cy="8" r="8" fill="#b4b4b4"/><path d="M1.8 8Q8 2.6 14.2 8Q8 13.4 1.8 8Z" fill="#e9e9e9"/><path d="M3 12.2L13 3.8" stroke="#5a5a5a" stroke-width="1.5"/></svg>
<div class="t" style="left:2442.60px;top:291.44px;font-size:12px;color:#000;transform:scaleX(0.8862);transform-origin:0 0;">B.Silkscreen</div>
<div class="r" style="left:2401px;top:309px;width:14px;height:11px;background:#840084;"></div>
<svg class="ic" style="left:2421px;top:307.0px" width="16" height="16" viewBox="0 0 16 16"><circle cx="8" cy="8" r="8" fill="#545454"/><path d="M1.8 8Q8 2.2 14.2 8Q8 13.8 1.8 8Z" fill="#fff"/><circle cx="8" cy="8" r="2.1" fill="none" stroke="#7a7a7a" stroke-width="1"/></svg>
<div class="t" style="left:2442.60px;top:309.44px;font-size:12px;color:#000;letter-spacing:-0.561px;">F.Mask</div>
<div class="r" style="left:2401px;top:327px;width:14px;height:11px;background:#848400;"></div>
<svg class="ic" style="left:2421px;top:325.0px" width="16" height="16" viewBox="0 0 16 16"><circle cx="8" cy="8" r="8" fill="#b4b4b4"/><path d="M1.8 8Q8 2.6 14.2 8Q8 13.4 1.8 8Z" fill="#e9e9e9"/><path d="M3 12.2L13 3.8" stroke="#5a5a5a" stroke-width="1.5"/></svg>
<div class="t" style="left:2442.60px;top:327.44px;font-size:12px;color:#000;transform:scaleX(0.8798);transform-origin:0 0;">B.Mask</div>
<div class="r" style="left:2401px;top:345px;width:14px;height:11px;background:#c2c2c2;"></div>
<svg class="ic" style="left:2421px;top:343.0px" width="16" height="16" viewBox="0 0 16 16"><circle cx="8" cy="8" r="8" fill="#545454"/><path d="M1.8 8Q8 2.2 14.2 8Q8 13.8 1.8 8Z" fill="#fff"/><circle cx="8" cy="8" r="2.1" fill="none" stroke="#7a7a7a" stroke-width="1"/></svg>
<div class="t" style="left:2442.60px;top:345.44px;font-size:12px;color:#000;letter-spacing:-0.327px;">User.Drawings</div>
<div class="r" style="left:2401px;top:363px;width:14px;height:11px;background:#000084;"></div>
<svg class="ic" style="left:2421px;top:361.0px" width="16" height="16" viewBox="0 0 16 16"><circle cx="8" cy="8" r="8" fill="#545454"/><path d="M1.8 8Q8 2.2 14.2 8Q8 13.8 1.8 8Z" fill="#fff"/><circle cx="8" cy="8" r="2.1" fill="none" stroke="#7a7a7a" stroke-width="1"/></svg>
<div class="t" style="left:2442.60px;top:363.44px;font-size:12px;color:#000;letter-spacing:-0.593px;">User.Comments</div>
<div class="r" style="left:2401px;top:381px;width:14px;height:11px;background:#008400;"></div>
<svg class="ic" style="left:2421px;top:379.0px" width="16" height="16" viewBox="0 0 16 16"><circle cx="8" cy="8" r="8" fill="#545454"/><path d="M1.8 8Q8 2.2 14.2 8Q8 13.8 1.8 8Z" fill="#fff"/><circle cx="8" cy="8" r="2.1" fill="none" stroke="#7a7a7a" stroke-width="1"/></svg>
<div class="t" style="left:2442.60px;top:381.44px;font-size:12px;color:#000;transform:scaleX(0.8797);transform-origin:0 0;">User.Eco1</div>
<div class="r" style="left:2401px;top:399px;width:14px;height:11px;background:#c2c200;"></div>
<svg class="ic" style="left:2421px;top:397.0px" width="16" height="16" viewBox="0 0 16 16"><circle cx="8" cy="8" r="8" fill="#545454"/><path d="M1.8 8Q8 2.2 14.2 8Q8 13.8 1.8 8Z" fill="#fff"/><circle cx="8" cy="8" r="2.1" fill="none" stroke="#7a7a7a" stroke-width="1"/></svg>
<div class="t" style="left:2442.60px;top:399.44px;font-size:12px;color:#000;transform:scaleX(0.8887);transform-origin:0 0;">User.Eco2</div>
<div class="r" style="left:2401px;top:417px;width:14px;height:11px;background:#c2c200;"></div>
<svg class="ic" style="left:2421px;top:415.0px" width="16" height="16" viewBox="0 0 16 16"><circle cx="8" cy="8" r="8" fill="#545454"/><path d="M1.8 8Q8 2.2 14.2 8Q8 13.8 1.8 8Z" fill="#fff"/><circle cx="8" cy="8" r="2.1" fill="none" stroke="#7a7a7a" stroke-width="1"/></svg>
<div class="t" style="left:2442.60px;top:417.44px;font-size:12px;color:#000;transform:scaleX(0.9066);transform-origin:0 0;">Edge.Cuts</div>
<div class="r" style="left:2401px;top:435px;width:14px;height:11px;background:#c200c2;"></div>
<svg class="ic" style="left:2421px;top:433.0px" width="16" height="16" viewBox="0 0 16 16"><circle cx="8" cy="8" r="8" fill="#545454"/><path d="M1.8 8Q8 2.2 14.2 8Q8 13.8 1.8 8Z" fill="#fff"/><circle cx="8" cy="8" r="2.1" fill="none" stroke="#7a7a7a" stroke-width="1"/></svg>
<div class="t" style="left:2442.60px;top:435.44px;font-size:12px;color:#000;letter-spacing:-0.156px;">Margin</div>
<div class="r" style="left:2401px;top:453px;width:14px;height:11px;background:#c2c2c2;"></div>
<svg class="ic" style="left:2421px;top:451.0px" width="16" height="16" viewBox="0 0 16 16"><circle cx="8" cy="8" r="8" fill="#545454"/><path d="M1.8 8Q8 2.2 14.2 8Q8 13.8 1.8 8Z" fill="#fff"/><circle cx="8" cy="8" r="2.1" fill="none" stroke="#7a7a7a" stroke-width="1"/></svg>
<div class="t" style="left:2442.60px;top:453.44px;font-size:12px;color:#000;letter-spacing:-0.292px;">F.Courtyard</div>
<div class="r" style="left:2401px;top:471px;width:14px;height:11px;background:#848484;"></div>
<svg class="ic" style="left:2421px;top:469.0px" width="16" height="16" viewBox="0 0 16 16"><circle cx="8" cy="8" r="8" fill="#545454"/><path d="M1.8 8Q8 2.2 14.2 8Q8 13.8 1.8 8Z" fill="#fff"/><circle cx="8" cy="8" r="2.1" fill="none" stroke="#7a7a7a" stroke-width="1"/></svg>
<div class="t" style="left:2442.60px;top:471.44px;font-size:12px;color:#000;letter-spacing:-0.493px;">B.Courtyard</div>
<div class="r" style="left:2401px;top:489px;width:14px;height:11px;background:#848484;"></div>
<svg class="ic" style="left:2421px;top:487.0px" width="16" height="16" viewBox="0 0 16 16"><circle cx="8" cy="8" r="8" fill="#545454"/><path d="M1.8 8Q8 2.2 14.2 8Q8 13.8 1.8 8Z" fill="#fff"/><circle cx="8" cy="8" r="2.1" fill="none" stroke="#7a7a7a" stroke-width="1"/></svg>
<div class="t" style="left:2442.60px;top:489.44px;font-size:12px;color:#000;transform:scaleX(0.8963);transform-origin:0 0;">F.Fab</div>
<div class="r" style="left:2401px;top:507px;width:14px;height:11px;background:#000084;"></div>
<svg class="ic" style="left:2421px;top:505.0px" width="16" height="16" viewBox="0 0 16 16"><circle cx="8" cy="8" r="8" fill="#545454"/><path d="M1.8 8Q8 2.2 14.2 8Q8 13.8 1.8 8Z" fill="#fff"/><circle cx="8" cy="8" r="2.1" fill="none" stroke="#7a7a7a" stroke-width="1"/></svg>
<div class="t" style="left:2442.60px;top:507.44px;font-size:12px;color:#000;transform:scaleX(0.8402);transform-origin:0 0;">B.Fab</div>
<div class="r" style="left:2401px;top:525px;width:14px;height:11px;background:#000084;"></div>
<svg class="ic" style="left:2421px;top:523.0px" width="16" height="16" viewBox="0 0 16 16"><circle cx="8" cy="8" r="8" fill="#545454"/><path d="M1.8 8Q8 2.2 14.2 8Q8 13.8 1.8 8Z" fill="#fff"/><circle cx="8" cy="8" r="2.1" fill="none" stroke="#7a7a7a" stroke-width="1"/></svg>
<div class="t" style="left:2442.60px;top:525.44px;font-size:12px;color:#000;transform:scaleX(0.8766);transform-origin:0 0;">User.1</div>
<div class="r" style="left:2401px;top:543px;width:14px;height:11px;background:#000084;"></div>
<svg class="ic" style="left:2421px;top:541.0px" width="16" height="16" viewBox="0 0 16 16"><circle cx="8" cy="8" r="8" fill="#545454"/><path d="M1.8 8Q8 2.2 14.2 8Q8 13.8 1.8 8Z" fill="#fff"/><circle cx="8" cy="8" r="2.1" fill="none" stroke="#7a7a7a" stroke-width="1"/></svg>
<div class="t" style="left:2442.60px;top:543.44px;font-size:12px;color:#000;transform:scaleX(0.9025);transform-origin:0 0;">User.2</div>
<div class="r" style="left:2401px;top:561px;width:14px;height:11px;background:#000084;"></div>
<svg class="ic" style="left:2421px;top:559.0px" width="16" height="16" viewBox="0 0 16 16"><circle cx="8" cy="8" r="8" fill="#545454"/><path d="M1.8 8Q8 2.2 14.2 8Q8 13.8 1.8 8Z" fill="#fff"/><circle cx="8" cy="8" r="2.1" fill="none" stroke="#7a7a7a" stroke-width="1"/></svg>
<div class="t" style="left:2442.60px;top:561.44px;font-size:12px;color:#000;transform:scaleX(0.9025);transform-origin:0 0;">User.3</div>
<div class="r" style="left:2401px;top:579px;width:14px;height:11px;background:#000084;"></div>
<svg class="ic" style="left:2421px;top:577.0px" width="16" height="16" viewBox="0 0 16 16"><circle cx="8" cy="8" r="8" fill="#545454"/><path d="M1.8 8Q8 2.2 14.2 8Q8 13.8 1.8 8Z" fill="#fff"/><circle cx="8" cy="8" r="2.1" fill="none" stroke="#7a7a7a" stroke-width="1"/></svg>
<div class="t" style="left:2442.60px;top:579.44px;font-size:12px;color:#000;transform:scaleX(0.9025);transform-origin:0 0;">User.4</div>
<div class="r" style="left:2401px;top:597px;width:14px;height:11px;background:#000084;"></div>
<svg class="ic" style="left:2421px;top:595.0px" width="16" height="16" viewBox="0 0 16 16"><circle cx="8" cy="8" r="8" fill="#545454"/><path d="M1.8 8Q8 2.2 14.2 8Q8 13.8 1.8 8Z" fill="#fff"/><circle cx="8" cy="8" r="2.1" fill="none" stroke="#7a7a7a" stroke-width="1"/></svg>
<div class="t" style="left:2442.60px;top:597.44px;font-size:12px;color:#000;transform:scaleX(0.9025);transform-origin:0 0;">User.5</div>
<div class="r" style="left:2401px;top:615px;width:14px;height:11px;background:#000084;"></div>
<svg class="ic" style="left:2421px;top:613.0px" width="16" height="16" viewBox="0 0 16 16"><circle cx="8" cy="8" r="8" fill="#545454"/><path d="M1.8 8Q8 2.2 14.2 8Q8 13.8 1.8 8Z" fill="#fff"/><circle cx="8" cy="8" r="2.1" fill="none" stroke="#7a7a7a" stroke-width="1"/></svg>
<div class="t" style="left:2442.60px;top:615.44px;font-size:12px;color:#000;transform:scaleX(0.9025);transform-origin:0 0;">User.6</div>
<div class="r" style="left:2401px;top:633px;width:14px;height:11px;background:#000084;"></div>
<svg class="ic" style="left:2421px;top:631.0px" width="16" height="16" viewBox="0 0 16 16"><circle cx="8" cy="8" r="8" fill="#545454"/><path d="M1.8 8Q8 2.2 14.2 8Q8 13.8 1.8 8Z" fill="#fff"/><circle cx="8" cy="8" r="2.1" fill="none" stroke="#7a7a7a" stroke-width="1"/></svg>
<div class="t" style="left:2442.60px;top:633.44px;font-size:12px;color:#000;transform:scaleX(0.9025);transform-origin:0 0;">User.7</div>
<div class="r" style="left:2401px;top:651px;width:14px;height:11px;background:#000084;"></div>
<svg class="ic" style="left:2421px;top:649.0px" width="16" height="16" viewBox="0 0 16 16"><circle cx="8" cy="8" r="8" fill="#545454"/><path d="M1.8 8Q8 2.2 14.2 8Q8 13.8 1.8 8Z" fill="#fff"/><circle cx="8" cy="8" r="2.1" fill="none" stroke="#7a7a7a" stroke-width="1"/></svg>
<div class="t" style="left:2442.60px;top:651.44px;font-size:12px;color:#000;transform:scaleX(0.9025);transform-origin:0 0;">User.8</div>
<div class="r" style="left:2401px;top:669px;width:14px;height:11px;background:#000084;"></div>
<svg class="ic" style="left:2421px;top:667.0px" width="16" height="16" viewBox="0 0 16 16"><circle cx="8" cy="8" r="8" fill="#545454"/><path d="M1.8 8Q8 2.2 14.2 8Q8 13.8 1.8 8Z" fill="#fff"/><circle cx="8" cy="8" r="2.1" fill="none" stroke="#7a7a7a" stroke-width="1"/></svg>
<div class="t" style="left:2442.60px;top:669.44px;font-size:12px;color:#000;transform:scaleX(0.9025);transform-origin:0 0;">User.9</div>
<div class="r" style="left:2384px;top:1145px;width:172px;height:19px;background:#fbfbfb;"></div>
<svg class="ic" style="left:2389.5px;top:1147.5px" width="5" height="8" viewBox="0 0 5 8"><path d="M0 0L5 4L0 8Z" fill="#444"/></svg>
<div class="t" style="left:2396.70px;top:1145.84px;font-size:12px;color:#5a6066;letter-spacing:-0.379px;">Layer Display Options</div>
<div class="t" style="left:2387.40px;top:1167.64px;font-size:12px;color:#000;letter-spacing:-0.515px;">Presets (Ctrl+Tab):</div>
<div class="cb" style="left:2387px;top:1183.5px;width:164px;height:20.0px;border-color:#d0d0d0"></div><div class="t" style="left:2391.50px;top:1188.34px;font-size:12px;color:#000;">-----</div><svg class="ic" style="left:2539px;top:1191.5px" width="10" height="7" viewBox="0 0 10 7"><path d="M1 1.2L5 5.4L9 1.2" fill="none" stroke="#444" stroke-width="1.1"/></svg>
<div class="r" style="left:2380px;top:1218px;width:180px;height:21px;background:#bbbbbb;"></div>
<div class="t" style="left:2383.00px;top:1222.84px;font-size:12px;color:#000;letter-spacing:-0.158px;">Selection Filter</div>
<div class="r" style="left:2380px;top:1239px;width:180px;height:100px;background:#f0f0f0;"></div>
<div class="r" style="left:2380.0px;top:1166px;width:1px;height:48px;background:#a0a0a0"></div>
<svg class="ic" style="left:2385px;top:1245px" width="13" height="13" viewBox="0 0 13 13"><rect x="0" y="0" width="13" height="13" rx="2.5" fill="#005fb8"/><path d="M3.2 6.7L5.6 9L9.9 4.3" fill="none" stroke="#fff" stroke-width="1.2"/></svg>
<svg class="ic" style="left:2477px;top:1245px" width="13" height="13" viewBox="0 0 13 13"><rect x="0" y="0" width="13" height="13" rx="2.5" fill="#005fb8"/><path d="M3.2 6.7L5.6 9L9.9 4.3" fill="none" stroke="#fff" stroke-width="1.2"/></svg>
<div class="t" style="left:2401.30px;top:1246.44px;font-size:12px;color:#000;letter-spacing:-0.393px;">All items</div>
<div class="t" style="left:2493.40px;top:1246.44px;font-size:12px;color:#000;letter-spacing:-0.509px;">Locked items</div>
<svg class="ic" style="left:2385px;top:1260px" width="13" height="13" viewBox="0 0 13 13"><rect x="0" y="0" width="13" height="13" rx="2.5" fill="#005fb8"/><path d="M3.2 6.7L5.6 9L9.9 4.3" fill="none" stroke="#fff" stroke-width="1.2"/></svg>
<svg class="ic" style="left:2477px;top:1260px" width="13" height="13" viewBox="0 0 13 13"><rect x="0" y="0" width="13" height="13" rx="2.5" fill="#005fb8"/><path d="M3.2 6.7L5.6 9L9.9 4.3" fill="none" stroke="#fff" stroke-width="1.2"/></svg>
<div class="t" style="left:2401.30px;top:1261.44px;font-size:12px;color:#000;letter-spacing:-0.017px;">Footprints</div>
<div class="t" style="left:2493.40px;top:1261.44px;font-size:12px;color:#000;transform:scaleX(0.8724);transform-origin:0 0;">Text</div>
<svg class="ic" style="left:2385px;top:1275px" width="13" height="13" viewBox="0 0 13 13"><rect x="0" y="0" width="13" height="13" rx="2.5" fill="#005fb8"/><path d="M3.2 6.7L5.6 9L9.9 4.3" fill="none" stroke="#fff" stroke-width="1.2"/></svg>
<svg class="ic" style="left:2477px;top:1275px" width="13" height="13" viewBox="0 0 13 13"><rect x="0" y="0" width="13" height="13" rx="2.5" fill="#005fb8"/><path d="M3.2 6.7L5.6 9L9.9 4.3" fill="none" stroke="#fff" stroke-width="1.2"/></svg>
<div class="t" style="left:2401.30px;top:1276.44px;font-size:12px;color:#000;transform:scaleX(0.8550);transform-origin:0 0;">Tracks</div>
<div class="t" style="left:2493.40px;top:1276.44px;font-size:12px;color:#000;transform:scaleX(0.8735);transform-origin:0 0;">Vias</div>
<svg class="ic" style="left:2385px;top:1290px" width="13" height="13" viewBox="0 0 13 13"><rect x="0" y="0" width="13" height="13" rx="2.5" fill="#005fb8"/><path d="M3.2 6.7L5.6 9L9.9 4.3" fill="none" stroke="#fff" stroke-width="1.2"/></svg>
<svg class="ic" style="left:2477px;top:1290px" width="13" height="13" viewBox="0 0 13 13"><rect x="0" y="0" width="13" height="13" rx="2.5" fill="#005fb8"/><path d="M3.2 6.7L5.6 9L9.9 4.3" fill="none" stroke="#fff" stroke-width="1.2"/></svg>
<div class="t" style="left:2401.30px;top:1291.44px;font-size:12px;color:#000;transform:scaleX(0.8592);transform-origin:0 0;">Pads</div>
<div class="t" style="left:2493.40px;top:1291.44px;font-size:12px;color:#000;letter-spacing:-0.560px;">Graphics</div>
<svg class="ic" style="left:2385px;top:1305px" width="13" height="13" viewBox="0 0 13 13"><rect x="0" y="0" width="13" height="13" rx="2.5" fill="#005fb8"/><path d="M3.2 6.7L5.6 9L9.9 4.3" fill="none" stroke="#fff" stroke-width="1.2"/></svg>
<svg class="ic" style="left:2477px;top:1305px" width="13" height="13" viewBox="0 0 13 13"><rect x="0" y="0" width="13" height="13" rx="2.5" fill="#005fb8"/><path d="M3.2 6.7L5.6 9L9.9 4.3" fill="none" stroke="#fff" stroke-width="1.2"/></svg>
<div class="t" style="left:2401.30px;top:1306.44px;font-size:12px;color:#000;transform:scaleX(0.9115);transform-origin:0 0;">Zones</div>
<div class="t" style="left:2493.40px;top:1306.44px;font-size:12px;color:#000;transform:scaleX(0.9046);transform-origin:0 0;">Rule Areas</div>
<svg class="ic" style="left:2385px;top:1320px" width="13" height="13" viewBox="0 0 13 13"><rect x="0" y="0" width="13" height="13" rx="2.5" fill="#005fb8"/><path d="M3.2 6.7L5.6 9L9.9 4.3" fill="none" stroke="#fff" stroke-width="1.2"/></svg>
<svg class="ic" style="left:2477px;top:1320px" width="13" height="13" viewBox="0 0 13 13"><rect x="0" y="0" width="13" height="13" rx="2.5" fill="#005fb8"/><path d="M3.2 6.7L5.6 9L9.9 4.3" fill="none" stroke="#fff" stroke-width="1.2"/></svg>
<div class="t" style="left:2401.30px;top:1321.44px;font-size:12px;color:#000;letter-spacing:-0.376px;">Dimensions</div>
<div class="t" style="left:2493.40px;top:1321.44px;font-size:12px;color:#000;letter-spacing:-0.272px;">Other items</div>
<div class="t" style="left:11.00px;top:1340.84px;font-size:12px;color:#6a6a6a;letter-spacing:-0.456px;">Pads</div>
<div class="t" style="left:11.00px;top:1356.04px;font-size:12px;color:#6a6a6a;transform:scaleX(0.9300);transform-origin:0 0;">83</div>
<div class="t" style="left:65.00px;top:1340.84px;font-size:12px;color:#6a6a6a;letter-spacing:-0.385px;">Vias</div>
<div class="t" style="left:65.00px;top:1356.04px;font-size:12px;color:#6a6a6a;letter-spacing:-0.467px;">2</div>
<div class="t" style="left:115.50px;top:1340.84px;font-size:12px;color:#6a6a6a;letter-spacing:-0.340px;">Track Segments</div>
<div class="t" style="left:115.50px;top:1356.04px;font-size:12px;color:#6a6a6a;transform:scaleX(0.9300);transform-origin:0 0;">210</div>
<div class="t" style="left:227.00px;top:1340.84px;font-size:12px;color:#6a6a6a;letter-spacing:-0.411px;">Nets</div>
<div class="t" style="left:227.00px;top:1356.04px;font-size:12px;color:#6a6a6a;transform:scaleX(0.9300);transform-origin:0 0;">48</div>
<div class="t" style="left:280.00px;top:1340.84px;font-size:12px;color:#6a6a6a;letter-spacing:0.019px;">Unrouted</div>
<div class="t" style="left:280.00px;top:1356.04px;font-size:12px;color:#6a6a6a;letter-spacing:-0.467px;">0</div>
<div class="r" style="left:0px;top:1369.0px;width:2560px;height:1px;background:#dadada"></div>
<div class="t" style="left:2.50px;top:1375.84px;font-size:12px;color:#000;letter-spacing:-0.045px;">File 'C:\Users\kutlu\New E\PCB\mechanical_anomaly_detection\mechanical_anomaly_detection.kicad_pcb' saved.</div>
<div class="r" style="left:1489.0px;top:1372px;width:1px;height:19px;background:#d4d4d4"></div>
<div class="r" style="left:1566.5px;top:1372px;width:1px;height:19px;background:#d4d4d4"></div>
<div class="r" style="left:1727.0px;top:1372px;width:1px;height:19px;background:#d4d4d4"></div>
<div class="r" style="left:1977.5px;top:1372px;width:1px;height:19px;background:#d4d4d4"></div>
<div class="r" style="left:2162.0px;top:1372px;width:1px;height:19px;background:#d4d4d4"></div>
<div class="r" style="left:2227.5px;top:1372px;width:1px;height:19px;background:#d4d4d4"></div>
<div class="r" style="left:2400.5px;top:1372px;width:1px;height:19px;background:#d4d4d4"></div>
<div class="t" style="left:1494.40px;top:1375.84px;font-size:12px;color:#000;transform:scaleX(0.8995);transform-origin:0 0;white-space:pre">Z 1.37</div>
<div class="t" style="left:1572.00px;top:1375.84px;font-size:12px;color:#000;transform:scaleX(0.8992);transform-origin:0 0;white-space:pre">X 103.3780  Y 6.3500</div>
<div class="t" style="left:1732.80px;top:1375.84px;font-size:12px;color:#000;letter-spacing:-0.443px;white-space:pre">dx 103.3780  dy 6.3500  dist 103.5728</div>
<div class="t" style="left:1983.40px;top:1375.84px;font-size:12px;color:#000;letter-spacing:-0.457px;white-space:pre">grid X 0.2540  Y 0.2540</div>
<div class="t" style="left:2167.00px;top:1375.84px;font-size:12px;color:#000;letter-spacing:1.006px;white-space:pre">mm</div>
<div class="t" style="left:2233.40px;top:1375.84px;font-size:12px;color:#000;letter-spacing:-0.227px;white-space:pre">Select item(s)</div>
<div id="cv"><svg xmlns="http://www.w3.org/2000/svg" width="2283" height="1203" viewBox="38 118 2283 1203"><defs><path id="gr" d="M47 0h1v1h-1zM59 0h1v1h-1zM72 0h1v1h-1zM84 0h2v1h-2zM97 0h1v1h-1zM109 0h1v1h-1zM122 0h1v1h-1zM134 0h1v1h-1zM146 0h1v1h-1zM159 0h1v1h-1zM171 0h1v1h-1zM184 0h1v1h-1zM196 0h1v1h-1zM208 0h2v1h-2zM221 0h1v1h-1zM234 0h1v1h-1zM246 0h1v1h-1zM259 0h1v1h-1zM271 0h1v1h-1zM284 0h1v1h-1zM296 0h1v1h-1zM309 0h1v1h-1zM321 0h1v1h-1zM333 0h2v1h-2zM346 0h1v1h-1zM359 0h1v1h-1zM371 0h1v1h-1zM384 0h1v1h-1zM396 0h1v1h-1zM409 0h1v1h-1zM421 0h1v1h-1zM434 0h1v1h-1zM446 0h1v1h-1zM458 0h2v1h-2zM471 0h1v1h-1zM484 0h1v1h-1zM496 0h1v1h-1zM509 0h1v1h-1zM521 0h1v1h-1zM534 0h1v1h-1zM546 0h1v1h-1zM559 0h1v1h-1zM571 0h1v1h-1zM583 0h2v1h-2zM596 0h1v1h-1zM609 0h1v1h-1zM621 0h1v1h-1zM634 0h1v1h-1zM646 0h1v1h-1zM659 0h1v1h-1zM671 0h1v1h-1zM684 0h1v1h-1zM696 0h1v1h-1zM708 0h2v1h-2zM721 0h1v1h-1zM734 0h1v1h-1zM746 0h1v1h-1zM759 0h1v1h-1zM771 0h1v1h-1zM784 0h1v1h-1zM796 0h1v1h-1zM809 0h1v1h-1zM821 0h1v1h-1zM833 0h2v1h-2zM846 0h1v1h-1zM859 0h1v1h-1zM871 0h1v1h-1zM884 0h1v1h-1zM896 0h1v1h-1zM909 0h1v1h-1zM921 0h1v1h-1zM934 0h1v1h-1zM946 0h1v1h-1zM958 0h2v1h-2zM971 0h1v1h-1zM984 0h1v1h-1zM996 0h1v1h-1zM1009 0h1v1h-1zM1021 0h1v1h-1zM1034 0h1v1h-1zM1046 0h1v1h-1zM1059 0h1v1h-1zM1071 0h1v1h-1zM1083 0h2v1h-2zM1096 0h1v1h-1zM1109 0h1v1h-1zM1121 0h1v1h-1zM1134 0h1v1h-1zM1146 0h1v1h-1zM1159 0h1v1h-1zM1171 0h1v1h-1zM1183 0h1v1h-1zM1196 0h1v1h-1zM1208 0h2v1h-2zM1221 0h1v1h-1zM1233 0h1v1h-1zM1246 0h1v1h-1zM1258 0h1v1h-1zM1271 0h1v1h-1zM1283 0h1v1h-1zM1296 0h1v1h-1zM1308 0h1v1h-1zM1321 0h1v1h-1zM1333 0h2v1h-2zM1346 0h1v1h-1zM1358 0h1v1h-1zM1371 0h1v1h-1zM1383 0h1v1h-1zM1396 0h1v1h-1zM1408 0h1v1h-1zM1421 0h1v1h-1zM1433 0h1v1h-1zM1446 0h1v1h-1zM1458 0h2v1h-2zM1471 0h1v1h-1zM1483 0h1v1h-1zM1496 0h1v1h-1zM1508 0h1v1h-1zM1521 0h1v1h-1zM1533 0h1v1h-1zM1546 0h1v1h-1zM1558 0h1v1h-1zM1571 0h1v1h-1zM1583 0h2v1h-2zM1596 0h1v1h-1zM1608 0h1v1h-1zM1621 0h1v1h-1zM1633 0h1v1h-1zM1646 0h1v1h-1zM1658 0h1v1h-1zM1671 0h1v1h-1zM1683 0h1v1h-1zM1696 0h1v1h-1zM1708 0h2v1h-2zM1721 0h1v1h-1zM1733 0h1v1h-1zM1746 0h1v1h-1zM1758 0h1v1h-1zM1771 0h1v1h-1zM1783 0h1v1h-1zM1796 0h1v1h-1zM1808 0h1v1h-1zM1821 0h1v1h-1zM1833 0h2v1h-2zM1846 0h1v1h-1zM1858 0h1v1h-1zM1871 0h1v1h-1zM1883 0h1v1h-1zM1896 0h1v1h-1zM1908 0h1v1h-1zM1921 0h1v1h-1zM1933 0h1v1h-1zM1946 0h1v1h-1zM1958 0h2v1h-2zM1971 0h1v1h-1zM1983 0h1v1h-1zM1996 0h1v1h-1zM2008 0h1v1h-1zM2021 0h1v1h-1zM2033 0h1v1h-1zM2046 0h1v1h-1zM2058 0h1v1h-1zM2071 0h1v1h-1zM2083 0h2v1h-2zM2096 0h1v1h-1zM2108 0h1v1h-1zM2121 0h1v1h-1zM2133 0h1v1h-1zM2146 0h1v1h-1zM2158 0h1v1h-1zM2171 0h1v1h-1zM2183 0h1v1h-1zM2196 0h1v1h-1zM2208 0h2v1h-2zM2220 0h1v1h-1zM2233 0h1v1h-1zM2245 0h1v1h-1zM2258 0h1v1h-1zM2270 0h1v1h-1zM2283 0h1v1h-1zM2295 0h1v1h-1zM2308 0h1v1h-1zM2320 0h1v1h-1z"/><path id="gR" d="M47 0h1v2h-1zM59 0h1v2h-1zM72 0h1v2h-1zM84 0h2v2h-2zM97 0h1v2h-1zM109 0h1v2h-1zM122 0h1v2h-1zM134 0h1v2h-1zM146 0h1v2h-1zM159 0h1v2h-1zM171 0h1v2h-1zM184 0h1v2h-1zM196 0h1v2h-1zM208 0h2v2h-2zM221 0h1v2h-1zM234 0h1v2h-1zM246 0h1v2h-1zM259 0h1v2h-1zM271 0h1v2h-1zM284 0h1v2h-1zM296 0h1v2h-1zM309 0h1v2h-1zM321 0h1v2h-1zM333 0h2v2h-2zM346 0h1v2h-1zM359 0h1v2h-1zM371 0h1v2h-1zM384 0h1v2h-1zM396 0h1v2h-1zM409 0h1v2h-1zM421 0h1v2h-1zM434 0h1v2h-1zM446 0h1v2h-1zM458 0h2v2h-2zM471 0h1v2h-1zM484 0h1v2h-1zM496 0h1v2h-1zM509 0h1v2h-1zM521 0h1v2h-1zM534 0h1v2h-1zM546 0h1v2h-1zM559 0h1v2h-1zM571 0h1v2h-1zM583 0h2v2h-2zM596 0h1v2h-1zM609 0h1v2h-1zM621 0h1v2h-1zM634 0h1v2h-1zM646 0h1v2h-1zM659 0h1v2h-1zM671 0h1v2h-1zM684 0h1v2h-1zM696 0h1v2h-1zM708 0h2v2h-2zM721 0h1v2h-1zM734 0h1v2h-1zM746 0h1v2h-1zM759 0h1v2h-1zM771 0h1v2h-1zM784 0h1v2h-1zM796 0h1v2h-1zM809 0h1v2h-1zM821 0h1v2h-1zM833 0h2v2h-2zM846 0h1v2h-1zM859 0h1v2h-1zM871 0h1v2h-1zM884 0h1v2h-1zM896 0h1v2h-1zM909 0h1v2h-1zM921 0h1v2h-1zM934 0h1v2h-1zM946 0h1v2h-1zM958 0h2v2h-2zM971 0h1v2h-1zM984 0h1v2h-1zM996 0h1v2h-1zM1009 0h1v2h-1zM1021 0h1v2h-1zM1034 0h1v2h-1zM1046 0h1v2h-1zM1059 0h1v2h-1zM1071 0h1v2h-1zM1083 0h2v2h-2zM1096 0h1v2h-1zM1109 0h1v2h-1zM1121 0h1v2h-1zM1134 0h1v2h-1zM1146 0h1v2h-1zM1159 0h1v2h-1zM1171 0h1v2h-1zM1183 0h1v2h-1zM1196 0h1v2h-1zM1208 0h2v2h-2zM1221 0h1v2h-1zM1233 0h1v2h-1zM1246 0h1v2h-1zM1258 0h1v2h-1zM1271 0h1v2h-1zM1283 0h1v2h-1zM1296 0h1v2h-1zM1308 0h1v2h-1zM1321 0h1v2h-1zM1333 0h2v2h-2zM1346 0h1v2h-1zM1358 0h1v2h-1zM1371 0h1v2h-1zM1383 0h1v2h-1zM1396 0h1v2h-1zM1408 0h1v2h-1zM1421 0h1v2h-1zM1433 0h1v2h-1zM1446 0h1v2h-1zM1458 0h2v2h-2zM1471 0h1v2h-1zM1483 0h1v2h-1zM1496 0h1v2h-1zM1508 0h1v2h-1zM1521 0h1v2h-1zM1533 0h1v2h-1zM1546 0h1v2h-1zM1558 0h1v2h-1zM1571 0h1v2h-1zM1583 0h2v2h-2zM1596 0h1v2h-1zM1608 0h1v2h-1zM1621 0h1v2h-1zM1633 0h1v2h-1zM1646 0h1v2h-1zM1658 0h1v2h-1zM1671 0h1v2h-1zM1683 0h1v2h-1zM1696 0h1v2h-1zM1708 0h2v2h-2zM1721 0h1v2h-1zM1733 0h1v2h-1zM1746 0h1v2h-1zM1758 0h1v2h-1zM1771 0h1v2h-1zM1783 0h1v2h-1zM1796 0h1v2h-1zM1808 0h1v2h-1zM1821 0h1v2h-1zM1833 0h2v2h-2zM1846 0h1v2h-1zM1858 0h1v2h-1zM1871 0h1v2h-1zM1883 0h1v2h-1zM1896 0h1v2h-1zM1908 0h1v2h-1zM1921 0h1v2h-1zM1933 0h1v2h-1zM1946 0h1v2h-1zM1958 0h2v2h-2zM1971 0h1v2h-1zM1983 0h1v2h-1zM1996 0h1v2h-1zM2008 0h1v2h-1zM2021 0h1v2h-1zM2033 0h1v2h-1zM2046 0h1v2h-1zM2058 0h1v2h-1zM2071 0h1v2h-1zM2083 0h2v2h-2zM2096 0h1v2h-1zM2108 0h1v2h-1zM2121 0h1v2h-1zM2133 0h1v2h-1zM2146 0h1v2h-1zM2158 0h1v2h-1zM2171 0h1v2h-1zM2183 0h1v2h-1zM2196 0h1v2h-1zM2208 0h2v2h-2zM2220 0h1v2h-1zM2233 0h1v2h-1zM2245 0h1v2h-1zM2258 0h1v2h-1zM2270 0h1v2h-1zM2283 0h1v2h-1zM2295 0h1v2h-1zM2308 0h1v2h-1zM2320 0h1v2h-1z"/></defs><g fill="#868686" shape-rendering="crispEdges"><use href="#gr" y="126"/><use href="#gr" y="139"/><use href="#gr" y="151"/><use href="#gR" y="163"/><use href="#gr" y="176"/><use href="#gr" y="189"/><use href="#gr" y="201"/><use href="#gr" y="214"/><use href="#gr" y="226"/><use href="#gr" y="239"/><use href="#gr" y="251"/><use href="#gr" y="264"/><use href="#gr" y="276"/><use href="#gR" y="288"/><use href="#gr" y="301"/><use href="#gr" y="314"/><use href="#gr" y="326"/><use href="#gr" y="339"/><use href="#gr" y="351"/><use href="#gr" y="364"/><use href="#gr" y="376"/><use href="#gr" y="389"/><use href="#gr" y="401"/><use href="#gR" y="413"/><use href="#gr" y="426"/><use href="#gr" y="439"/><use href="#gr" y="451"/><use href="#gr" y="464"/><use href="#gr" y="476"/><use href="#gr" y="489"/><use href="#gr" y="501"/><use href="#gr" y="514"/><use href="#gr" y="526"/><use href="#gR" y="538"/><use href="#gr" y="551"/><use href="#gr" y="564"/><use href="#gr" y="576"/><use href="#gr" y="589"/><use href="#gr" y="601"/><use href="#gr" y="614"/><use href="#gr" y="626"/><use href="#gr" y="639"/><use href="#gr" y="651"/><use href="#gR" y="663"/><use href="#gr" y="676"/><use href="#gr" y="689"/><use href="#gr" y="701"/><use href="#gr" y="714"/><use href="#gr" y="726"/><use href="#gr" y="739"/><use href="#gr" y="751"/><use href="#gr" y="764"/><use href="#gr" y="776"/><use href="#gR" y="788"/><use href="#gr" y="801"/><use href="#gr" y="814"/><use href="#gr" y="826"/><use href="#gr" y="839"/><use href="#gr" y="851"/><use href="#gr" y="864"/><use href="#gr" y="876"/><use href="#gr" y="889"/><use href="#gr" y="901"/><use href="#gR" y="913"/><use href="#gr" y="926"/><use href="#gr" y="938"/><use href="#gr" y="951"/><use href="#gr" y="963"/><use href="#gr" y="976"/><use href="#gr" y="988"/><use href="#gr" y="1001"/><use href="#gr" y="1013"/><use href="#gr" y="1026"/><use href="#gR" y="1038"/><use href="#gr" y="1051"/><use href="#gr" y="1063"/><use href="#gr" y="1076"/><use href="#gr" y="1088"/><use href="#gr" y="1101"/><use href="#gr" y="1113"/><use href="#gr" y="1126"/><use href="#gr" y="1138"/><use href="#gr" y="1151"/><use href="#gR" y="1163"/><use href="#gr" y="1176"/><use href="#gr" y="1188"/><use href="#gr" y="1201"/><use href="#gr" y="1213"/><use href="#gr" y="1226"/><use href="#gr" y="1238"/><use href="#gr" y="1251"/><use href="#gr" y="1263"/><use href="#gr" y="1276"/><use href="#gR" y="1288"/><use href="#gr" y="1301"/><use href="#gr" y="1313"/></g><path d="M585.5 1330V289.5H2045.5V1330" fill="none" stroke="#848484" stroke-width="1" shape-rendering="crispEdges"/><g fill="none" stroke="#4a0000" stroke-width="1" shape-rendering="crispEdges"><rect x="634.5" y="338.5" width="1361" height="935"/><rect x="640.5" y="348.5" width="1345" height="915"/><path d="M879.5 338.5V348.5M879.5 1263.5V1273.5M1125.5 338.5V348.5M1125.5 1263.5V1273.5M1371.5 338.5V348.5M1371.5 1263.5V1273.5M1617.5 338.5V348.5M1617.5 1263.5V1273.5M1863.5 338.5V348.5M1863.5 1263.5V1273.5M634.5 585.5H640.5M1985.5 585.5H1995.5M634.5 831.5H640.5M1985.5 831.5H1995.5M634.5 1077.5H640.5M1985.5 1077.5H1995.5M1454.5 1263.5V1105.5H1985.5M1454.5 1182.5H1985.5M1454.5 1211.5H1985.5M1454.5 1231.5H1985.5M1454.5 1245.5H1985.5M1553.5 1231.5V1245.5M1868.5 1231.5V1263.5"/></g><g fill="#5c0000" stroke="#5c0000" stroke-width="0.2" font-family="Liberation Mono,monospace" font-size="9.5"><text x="757" y="346.8" font-size="7.5">1</text><text x="757" y="1271.8" font-size="7.5">1</text><text x="1003" y="346.8" font-size="7.5">2</text><text x="1003" y="1271.8" font-size="7.5">2</text><text x="1249" y="346.8" font-size="7.5">3</text><text x="1249" y="1271.8" font-size="7.5">3</text><text x="1495" y="346.8" font-size="7.5">4</text><text x="1495" y="1271.8" font-size="7.5">4</text><text x="1741" y="346.8" font-size="7.5">5</text><text x="1741" y="1271.8" font-size="7.5">5</text><text x="1987" y="346.8" font-size="7.5">6</text><text x="1987" y="1271.8" font-size="7.5">6</text><text x="635.3" y="465" font-size="7.5">A</text><text x="1988.5" y="465" font-size="7.5">A</text><text x="635.3" y="711" font-size="7.5">B</text><text x="1988.5" y="711" font-size="7.5">B</text><text x="635.3" y="957" font-size="7.5">C</text><text x="1988.5" y="957" font-size="7.5">C</text><text x="635.3" y="1203" font-size="7.5">D</text><text x="1988.5" y="1203" font-size="7.5">D</text><text x="1460.5" y="1193" textLength="32" lengthAdjust="spacingAndGlyphs">Sheet:</text><text x="1460.5" y="1206.5" textLength="258" lengthAdjust="spacingAndGlyphs">File: mechanical_anomaly_detection.kicad_pcb</text><text x="1462" y="1225" font-size="12" font-weight="bold" font-style="italic" textLength="36" lengthAdjust="spacingAndGlyphs">Title:</text><text x="1460.5" y="1242.5" textLength="44" lengthAdjust="spacingAndGlyphs">Size: A4</text><text x="1569.5" y="1242.5" textLength="27" lengthAdjust="spacingAndGlyphs">Date:</text><text x="1880" y="1242.5" font-weight="bold" textLength="21" lengthAdjust="spacingAndGlyphs">Rev:</text><text x="1460.5" y="1256.5" textLength="151" lengthAdjust="spacingAndGlyphs" xml:space="preserve">KiCad E.D.A.  kicad (6.0.6)</text><text x="1880" y="1256.5" textLength="39" lengthAdjust="spacingAndGlyphs">Id: 1/1</text></g><path d="M1101.72 675.43A3.00 3.00 0 0 0 1103.49 673.22L1118.72 590.05A12.50 12.50 0 0 1 1131.02 579.80L1223.78 579.80A12.50 12.50 0 0 1 1236.08 590.05L1251.30 673.17A3.00 3.00 0 0 0 1253.14 675.42L1298.45 693.57A3.00 3.00 0 0 0 1301.23 693.28L1371.80 646.55A12.50 12.50 0 0 1 1387.54 648.13L1450.87 711.46A12.50 12.50 0 0 1 1452.45 727.20L1405.73 797.75A3.00 3.00 0 0 0 1405.46 800.56L1423.58 844.29A3.00 3.00 0 0 0 1425.81 846.09L1508.95 861.32A12.50 12.50 0 0 1 1519.20 873.62L1519.20 966.38A12.50 12.50 0 0 1 1508.95 978.68L1425.81 993.91A3.00 3.00 0 0 0 1423.58 995.71L1405.46 1039.44A3.00 3.00 0 0 0 1405.73 1042.25L1452.45 1112.80A12.50 12.50 0 0 1 1450.87 1128.54L1387.54 1191.87A12.50 12.50 0 0 1 1371.80 1193.45L1301.25 1146.73A3.00 3.00 0 0 0 1298.44 1146.46L1254.71 1164.58A3.00 3.00 0 0 0 1252.91 1166.81L1237.68 1249.95A12.50 12.50 0 0 1 1225.38 1260.20L1132.62 1260.20A12.50 12.50 0 0 1 1120.32 1249.95L1105.09 1166.81A3.00 3.00 0 0 0 1103.29 1164.58L1059.56 1146.46A3.00 3.00 0 0 0 1056.75 1146.73L986.20 1193.45A12.50 12.50 0 0 1 970.46 1191.87L907.13 1128.54A12.50 12.50 0 0 1 905.55 1112.80L952.27 1042.25A3.00 3.00 0 0 0 952.54 1039.44L934.42 995.71A3.00 3.00 0 0 0 932.19 993.91L849.05 978.68A12.50 12.50 0 0 1 838.80 966.38L838.80 873.62A12.50 12.50 0 0 1 849.05 861.32L932.19 846.09A3.00 3.00 0 0 0 934.42 844.29L952.54 800.56A3.00 3.00 0 0 0 952.27 797.75L905.55 727.20A12.50 12.50 0 0 1 907.13 711.46L970.46 648.13A12.50 12.50 0 0 1 986.20 646.55L1056.73 693.26A3.00 3.00 0 0 0 1059.57 693.51ZM1025.5 926.5A155.5 155.5 0 1 0 1336.5 926.5A155.5 155.5 0 1 0 1025.5 926.5Z" fill="#008484" fill-rule="evenodd"/><path d="M1177.5 149.6L1181.0 149.9L1183.5 151.5L1187.5 157.0L1193.0 166.0L1197.5 177.5L1203.0 190.0L1205.0 192.5L1215.0 195.0L1227.5 200.0L1240.0 206.0L1252.5 215.0L1263.8 225.0L1273.8 236.0L1282.5 249.0L1290.0 262.5L1295.0 276.0L1297.5 290.0L1298.2 297.5L1300.0 306.0L1307.5 318.0L1322.5 327.0L1322.5 376.0L1311.0 382.0L1311.0 475.0L1310.0 481.0L1305.0 492.5L1295.0 503.8L1282.5 513.8L1270.0 521.0L1257.5 525.3L1245.0 526.5L1110.0 526.5L1097.5 526.0L1086.0 523.2L1074.0 517.5L1061.0 508.8L1051.0 500.0L1045.0 490.0L1042.0 480.0L1042.0 382.0L1030.6 376.0L1030.6 327.0L1045.0 318.8L1053.0 306.0L1055.0 297.5L1055.8 290.0L1060.0 276.0L1066.0 261.0L1074.0 247.5L1082.5 235.0L1092.5 224.0L1102.5 215.0L1115.0 206.0L1127.5 200.0L1140.0 195.0L1150.0 192.0L1151.0 190.0L1157.5 176.0L1162.5 164.0L1167.5 156.0L1171.5 151.5L1174.0 149.9ZM1071.0 419.5L1071.0 380.0L1069.3 348.0L1069.0 311.0L1070.0 309.5L1070.0 304.0L1070.8 296.0L1072.5 284.0L1076.0 271.0L1081.0 260.0L1089.0 249.0L1097.5 239.0L1107.5 230.0L1120.0 222.5L1132.5 216.0L1145.0 212.5L1157.0 210.0L1159.4 207.5L1160.6 204.0L1164.0 195.0L1166.0 182.5L1170.0 174.0L1176.0 167.0L1177.0 166.5L1178.0 167.0L1184.0 174.0L1187.5 182.5L1189.4 195.0L1192.5 204.0L1194.0 207.0L1196.0 210.0L1207.5 212.0L1220.0 215.6L1232.5 221.0L1245.0 229.0L1256.0 237.5L1265.0 247.5L1272.5 259.0L1278.0 270.0L1281.5 282.5L1283.0 295.0L1283.0 311.0L1284.0 311.5L1284.0 346.0L1283.0 346.5L1282.0 380.0L1282.0 419.5L1279.8 423.0L1275.2 427.3L1270.9 430.0L1257.5 432.3L1215.0 433.8L1138.8 433.8L1095.0 432.8L1082.5 430.6L1080.0 429.0L1076.0 426.5L1073.0 423.5ZM1061.8 315.8L1055.9 321.2L1055.9 412.5L1058.0 416.0L1062.0 421.5L1066.0 425.0L1069.5 427.7L1067.0 424.5L1065.0 422.0L1063.1 418.7L1063.0 345.5L1062.0 345.0L1062.0 316.0ZM1290.1 314.9L1296.0 320.1L1296.0 413.4L1293.5 417.5L1290.0 421.5L1286.5 425.0L1282.2 428.6L1285.0 424.0L1288.0 420.5L1289.9 417.3L1289.9 315.0ZM1036.0 334.4L1050.0 331.0L1050.0 371.0L1036.0 369.8ZM1303.0 331.0L1317.0 334.4L1317.0 370.0L1303.0 371.2ZM1056.9 426.9L1056.9 480.0L1058.8 486.0L1065.0 495.0L1075.0 503.8L1086.0 510.0L1097.5 513.0L1112.5 513.8L1113.8 443.4L1100.0 442.5L1082.5 438.8L1070.0 434.4ZM1120.0 443.8L1233.0 443.8L1234.4 513.8L1118.0 513.8ZM1238.8 443.4L1252.5 442.5L1270.0 438.8L1282.5 434.4L1295.6 426.9L1295.6 480.0L1293.8 486.0L1287.5 495.0L1277.5 503.8L1265.0 510.0L1252.5 513.0L1240.0 513.8Z" fill="#008484" fill-rule="evenodd"/><path d="M1087.5 330A35 41 0 1 0 1157.5 330A35 41 0 1 0 1087.5 330ZM1098.2 334.1A27 28.1 0 1 0 1152.2 334.1A27 28.1 0 1 0 1098.2 334.1ZM1195.0 330A35.3 41 0 1 0 1265.6 330A35.3 41 0 1 0 1195.0 330ZM1201 334.1A27 28.1 0 1 0 1255 334.1A27 28.1 0 1 0 1201 334.1Z" fill="#008484" fill-rule="evenodd"/><path d="M1156.8 209.5L1174.4 380.6L1180.0 380.6L1196.2 209.5L1193.8 209.5L1177.2 370.0L1159.6 209.5Z" fill="#008484"/><path d="M1256.75 643.20A6.00 6.00 0 0 0 1260.51 647.84L1307.18 665.95A14.00 14.00 0 0 0 1320.23 664.40L1390.87 615.34A17.00 17.00 0 0 1 1412.59 617.28L1479.47 684.16A17.00 17.00 0 0 1 1481.41 705.88L1432.41 776.43A14.00 14.00 0 0 0 1430.91 789.63L1448.90 834.48A6.00 6.00 0 0 0 1453.47 838.16L1542.29 853.20A17.00 17.00 0 0 1 1556.45 869.96L1556.45 965.84A17.00 17.00 0 0 1 1542.29 982.60L1453.47 997.64A6.00 6.00 0 0 0 1448.90 1001.32L1430.91 1046.17A14.00 14.00 0 0 0 1432.41 1059.37L1481.41 1129.92A17.00 17.00 0 0 1 1479.47 1151.64L1412.59 1218.52A17.00 17.00 0 0 1 1390.87 1220.46L1320.32 1171.46A14.00 14.00 0 0 0 1307.12 1169.96L1262.27 1187.95A6.00 6.00 0 0 0 1258.59 1192.52L1243.55 1281.34A17.00 17.00 0 0 1 1226.79 1295.50L1130.91 1295.50A17.00 17.00 0 0 1 1114.15 1281.34L1099.11 1192.52A6.00 6.00 0 0 0 1095.43 1187.95L1050.58 1169.96A14.00 14.00 0 0 0 1037.38 1171.46L966.83 1220.46A17.00 17.00 0 0 1 945.11 1218.52L878.23 1151.64A17.00 17.00 0 0 1 876.29 1129.92L925.29 1059.37A14.00 14.00 0 0 0 926.79 1046.17L908.80 1001.32A6.00 6.00 0 0 0 904.23 997.64L815.41 982.60A17.00 17.00 0 0 1 801.25 965.84L801.25 869.96A17.00 17.00 0 0 1 815.41 853.20L904.23 838.16A6.00 6.00 0 0 0 908.80 834.48L926.79 789.63A14.00 14.00 0 0 0 925.29 776.43L876.29 705.88A17.00 17.00 0 0 1 878.23 684.16L945.11 617.28A17.00 17.00 0 0 1 966.83 615.34L1037.30 664.28A14.00 14.00 0 0 0 1050.65 665.71L1093.66 647.86A6.00 6.00 0 0 0 1097.27 643.35L1109.40 574.00L1112.00 561.00L1115.00 552.50L1118.75 546.00L1105.00 543.00L1090.00 537.50L1075.00 530.00L1061.00 520.00L1050.00 510.00L1041.00 498.75L1036.50 487.50L1036.30 382.50L1024.40 378.75L1023.50 327.50L1022.60 327.00L1038.75 317.50L1045.00 310.00L1049.50 301.00L1050.50 290.00L1052.00 280.00L1056.00 265.00L1062.50 251.00L1070.00 239.00L1079.00 227.50L1087.50 217.50L1097.50 209.00L1107.50 201.00L1117.50 196.00L1130.00 191.00L1140.00 187.50L1150.00 184.00L1155.00 172.50L1161.00 159.00L1166.00 146.00L1168.50 142.80L1171.50 141.30L1182.00 141.30L1185.00 142.80L1187.50 146.00L1192.50 160.00L1198.00 174.00L1203.00 184.40L1212.50 187.75L1225.00 192.50L1240.00 199.00L1252.50 206.00L1265.00 217.50L1275.00 229.00L1284.00 241.00L1291.00 255.00L1297.50 269.00L1301.00 282.50L1302.20 290.00L1302.70 301.00L1306.00 309.00L1313.00 317.00L1329.60 326.30L1329.75 378.00L1316.20 382.00L1316.50 487.50L1311.00 500.00L1302.50 511.00L1290.00 522.50L1275.00 531.00L1257.50 538.75L1235.00 544.40L1240.00 552.50L1243.75 562.50L1245.60 574.00Z" fill="none" stroke="#c2c200" stroke-width="1.25" stroke-linejoin="round"/><circle cx="1178.8" cy="918.5" r="116" fill="none" stroke="#c2c200" stroke-width="1.25"/><rect x="1115.5" y="752.5" width="130.0" height="18.0" fill="none" stroke="#8c8c8c" stroke-width="1" /><rect x="1117.8" y="755.5" width="125.0" height="12.0" fill="none" stroke="#000084" stroke-width="0.9" /><rect x="1118.3" y="755.3" width="11.6" height="10.8" fill="#c8c800"/><circle cx="1124.1" cy="760.7" r="1.9" fill="#000"/><path transform="translate(1124.1 760.7) rotate(0)" d="M0 1.6H5L5.4 3.6L8.6 5.6L6.8 6.8L6.6 9.8L4.6 7.6L2.6 5.4L0.6 4.4Z" fill="#2cf41a"/><circle cx="1136.6" cy="760.7" r="5" fill="#c8c800"/><circle cx="1136.6" cy="760.7" r="1.9" fill="#000"/><path transform="translate(1136.6 760.7) rotate(0)" d="M0 1.6H5L5.4 3.6L8.6 5.6L6.8 6.8L6.6 9.8L4.6 7.6L2.6 5.4L0.6 4.4Z" fill="#2cf41a"/><circle cx="1149.0" cy="760.7" r="5" fill="#c8c800"/><circle cx="1149.0" cy="760.7" r="1.9" fill="#000"/><path transform="translate(1149.0 760.7) rotate(0)" d="M0 1.6H5L5.4 3.6L8.6 5.6L6.8 6.8L6.6 9.8L4.6 7.6L2.6 5.4L0.6 4.4Z" fill="#2cf41a"/><circle cx="1161.5" cy="760.7" r="5" fill="#c8c800"/><circle cx="1161.5" cy="760.7" r="1.9" fill="#000"/><path transform="translate(1161.5 760.7) rotate(0)" d="M0 1.6H5L5.4 3.6L8.6 5.6L6.8 6.8L6.6 9.8L4.6 7.6L2.6 5.4L0.6 4.4Z" fill="#2cf41a"/><circle cx="1173.9" cy="760.7" r="5" fill="#c8c800"/><circle cx="1173.9" cy="760.7" r="1.9" fill="#000"/><path transform="translate(1173.9 760.7) rotate(0)" d="M0 1.6H5L5.4 3.6L8.6 5.6L6.8 6.8L6.6 9.8L4.6 7.6L2.6 5.4L0.6 4.4Z" fill="#2cf41a"/><circle cx="1186.4" cy="760.7" r="5" fill="#c8c800"/><circle cx="1186.4" cy="760.7" r="1.9" fill="#000"/><path transform="translate(1186.4 760.7) rotate(0)" d="M0 1.6H5L5.4 3.6L8.6 5.6L6.8 6.8L6.6 9.8L4.6 7.6L2.6 5.4L0.6 4.4Z" fill="#2cf41a"/><circle cx="1198.9" cy="760.7" r="5" fill="#c8c800"/><circle cx="1198.9" cy="760.7" r="1.9" fill="#000"/><path transform="translate(1198.9 760.7) rotate(0)" d="M0 1.6H5L5.4 3.6L8.6 5.6L6.8 6.8L6.6 9.8L4.6 7.6L2.6 5.4L0.6 4.4Z" fill="#2cf41a"/><circle cx="1211.3" cy="760.7" r="5" fill="#c8c800"/><circle cx="1211.3" cy="760.7" r="1.9" fill="#000"/><path transform="translate(1211.3 760.7) rotate(0)" d="M0 1.6H5L5.4 3.6L8.6 5.6L6.8 6.8L6.6 9.8L4.6 7.6L2.6 5.4L0.6 4.4Z" fill="#2cf41a"/><circle cx="1223.8" cy="760.7" r="5" fill="#c8c800"/><circle cx="1223.8" cy="760.7" r="1.9" fill="#000"/><path transform="translate(1223.8 760.7) rotate(0)" d="M0 1.6H5L5.4 3.6L8.6 5.6L6.8 6.8L6.6 9.8L4.6 7.6L2.6 5.4L0.6 4.4Z" fill="#2cf41a"/><circle cx="1236.2" cy="760.7" r="5" fill="#c8c800"/><circle cx="1236.2" cy="760.7" r="1.9" fill="#000"/><path transform="translate(1236.2 760.7) rotate(0)" d="M0 1.6H5L5.4 3.6L8.6 5.6L6.8 6.8L6.6 9.8L4.6 7.6L2.6 5.4L0.6 4.4Z" fill="#2cf41a"/><text transform="translate(1245 786) rotate(90) scale(-1 1)" font-family="Liberation Mono,monospace" font-size="8" fill="#000084" textLength="46" lengthAdjust="spacingAndGlyphs">TFT_ili9341</text><rect x="1301.5" y="761.5" width="18.0" height="230.0" fill="none" stroke="#8c8c8c" stroke-width="1" /><rect x="1304.5" y="764.5" width="12.0" height="224.0" fill="none" stroke="#000084" stroke-width="0.9" /><rect x="1304.2" y="764.6" width="11.6" height="10.8" fill="#c8c800"/><circle cx="1310.0" cy="770.0" r="1.9" fill="#000"/><path transform="translate(1310.0 770.0) rotate(0)" d="M0 1.6H5L5.4 3.6L8.6 5.6L6.8 6.8L6.6 9.8L4.6 7.6L2.6 5.4L0.6 4.4Z" fill="#2cf41a"/><circle cx="1310.0" cy="782.5" r="5" fill="#c8c800"/><circle cx="1310.0" cy="782.5" r="1.9" fill="#000"/><path transform="translate(1310.0 782.5) rotate(0)" d="M0 1.6H5L5.4 3.6L8.6 5.6L6.8 6.8L6.6 9.8L4.6 7.6L2.6 5.4L0.6 4.4Z" fill="#2cf41a"/><circle cx="1310.0" cy="794.9" r="5" fill="#c8c800"/><circle cx="1310.0" cy="794.9" r="1.9" fill="#000"/><path transform="translate(1310.0 794.9) rotate(0)" d="M0 1.6H5L5.4 3.6L8.6 5.6L6.8 6.8L6.6 9.8L4.6 7.6L2.6 5.4L0.6 4.4Z" fill="#2cf41a"/><circle cx="1310.0" cy="807.4" r="5" fill="#c8c800"/><circle cx="1310.0" cy="807.4" r="1.9" fill="#000"/><path transform="translate(1310.0 807.4) rotate(0)" d="M0 1.6H5L5.4 3.6L8.6 5.6L6.8 6.8L6.6 9.8L4.6 7.6L2.6 5.4L0.6 4.4Z" fill="#2cf41a"/><circle cx="1310.0" cy="819.8" r="5" fill="#c8c800"/><circle cx="1310.0" cy="819.8" r="1.9" fill="#000"/><path transform="translate(1310.0 819.8) rotate(0)" d="M0 1.6H5L5.4 3.6L8.6 5.6L6.8 6.8L6.6 9.8L4.6 7.6L2.6 5.4L0.6 4.4Z" fill="#2cf41a"/><circle cx="1310.0" cy="832.3" r="5" fill="#c8c800"/><circle cx="1310.0" cy="832.3" r="1.9" fill="#000"/><path transform="translate(1310.0 832.3) rotate(0)" d="M0 1.6H5L5.4 3.6L8.6 5.6L6.8 6.8L6.6 9.8L4.6 7.6L2.6 5.4L0.6 4.4Z" fill="#2cf41a"/><circle cx="1310.0" cy="844.8" r="5" fill="#c8c800"/><circle cx="1310.0" cy="844.8" r="1.9" fill="#000"/><circle cx="1310.0" cy="857.2" r="5" fill="#c8c800"/><circle cx="1310.0" cy="857.2" r="1.9" fill="#000"/><circle cx="1310.0" cy="869.7" r="5" fill="#c8c800"/><circle cx="1310.0" cy="869.7" r="1.9" fill="#000"/><circle cx="1310.0" cy="882.1" r="5" fill="#c8c800"/><circle cx="1310.0" cy="882.1" r="1.9" fill="#000"/><circle cx="1310.0" cy="894.6" r="5" fill="#c8c800"/><circle cx="1310.0" cy="894.6" r="1.9" fill="#000"/><circle cx="1310.0" cy="907.1" r="5" fill="#c8c800"/><circle cx="1310.0" cy="907.1" r="1.9" fill="#000"/><circle cx="1310.0" cy="919.5" r="5" fill="#c8c800"/><circle cx="1310.0" cy="919.5" r="1.9" fill="#000"/><circle cx="1310.0" cy="932.0" r="5" fill="#c8c800"/><circle cx="1310.0" cy="932.0" r="1.9" fill="#000"/><circle cx="1310.0" cy="944.4" r="5" fill="#c8c800"/><circle cx="1310.0" cy="944.4" r="1.9" fill="#000"/><circle cx="1310.0" cy="956.9" r="5" fill="#c8c800"/><circle cx="1310.0" cy="956.9" r="1.9" fill="#000"/><circle cx="1310.0" cy="969.4" r="5" fill="#c8c800"/><circle cx="1310.0" cy="969.4" r="1.9" fill="#000"/><circle cx="1310.0" cy="981.8" r="5" fill="#c8c800"/><circle cx="1310.0" cy="981.8" r="1.9" fill="#000"/><text transform="translate(1352.5 998) rotate(0) scale(-1 1)" font-family="Liberation Mono,monospace" font-size="8" fill="#000084" textLength="83" lengthAdjust="spacingAndGlyphs">FireBeetle_2_ESP32_S3</text><rect x="1409.5" y="811.5" width="17.0" height="180.0" fill="none" stroke="#8c8c8c" stroke-width="1" /><rect x="1411.5" y="814.5" width="13.0" height="174.0" fill="none" stroke="#000084" stroke-width="0.9" /><rect x="1412.0" y="814.6" width="11.6" height="10.8" fill="#c8c800"/><circle cx="1417.8" cy="820.0" r="1.9" fill="#000"/><path transform="translate(1417.8 820.0) rotate(0)" d="M0 1.6H5L5.4 3.6L8.6 5.6L6.8 6.8L6.6 9.8L4.6 7.6L2.6 5.4L0.6 4.4Z" fill="#2cf41a"/><circle cx="1417.8" cy="832.5" r="5" fill="#c8c800"/><circle cx="1417.8" cy="832.5" r="1.9" fill="#000"/><path transform="translate(1417.8 832.5) rotate(0)" d="M0 1.6H5L5.4 3.6L8.6 5.6L6.8 6.8L6.6 9.8L4.6 7.6L2.6 5.4L0.6 4.4Z" fill="#2cf41a"/><circle cx="1417.8" cy="844.9" r="5" fill="#c8c800"/><circle cx="1417.8" cy="844.9" r="1.9" fill="#000"/><path transform="translate(1417.8 844.9) rotate(0)" d="M0 1.6H5L5.4 3.6L8.6 5.6L6.8 6.8L6.6 9.8L4.6 7.6L2.6 5.4L0.6 4.4Z" fill="#2cf41a"/><circle cx="1417.8" cy="857.4" r="5" fill="#c8c800"/><circle cx="1417.8" cy="857.4" r="1.9" fill="#000"/><path transform="translate(1417.8 857.4) rotate(0)" d="M0 1.6H5L5.4 3.6L8.6 5.6L6.8 6.8L6.6 9.8L4.6 7.6L2.6 5.4L0.6 4.4Z" fill="#2cf41a"/><circle cx="1417.8" cy="869.8" r="5" fill="#c8c800"/><circle cx="1417.8" cy="869.8" r="1.9" fill="#000"/><path transform="translate(1417.8 869.8) rotate(0)" d="M0 1.6H5L5.4 3.6L8.6 5.6L6.8 6.8L6.6 9.8L4.6 7.6L2.6 5.4L0.6 4.4Z" fill="#2cf41a"/><circle cx="1417.8" cy="882.3" r="5" fill="#c8c800"/><circle cx="1417.8" cy="882.3" r="1.9" fill="#000"/><path transform="translate(1417.8 882.3) rotate(0)" d="M0 1.6H5L5.4 3.6L8.6 5.6L6.8 6.8L6.6 9.8L4.6 7.6L2.6 5.4L0.6 4.4Z" fill="#2cf41a"/><circle cx="1417.8" cy="894.8" r="5" fill="#c8c800"/><circle cx="1417.8" cy="894.8" r="1.9" fill="#000"/><path transform="translate(1417.8 894.8) rotate(0)" d="M0 1.6H5L5.4 3.6L8.6 5.6L6.8 6.8L6.6 9.8L4.6 7.6L2.6 5.4L0.6 4.4Z" fill="#2cf41a"/><circle cx="1417.8" cy="907.2" r="5" fill="#c8c800"/><circle cx="1417.8" cy="907.2" r="1.9" fill="#000"/><path transform="translate(1417.8 907.2) rotate(0)" d="M0 1.6H5L5.4 3.6L8.6 5.6L6.8 6.8L6.6 9.8L4.6 7.6L2.6 5.4L0.6 4.4Z" fill="#2cf41a"/><circle cx="1417.8" cy="919.7" r="5" fill="#c8c800"/><circle cx="1417.8" cy="919.7" r="1.9" fill="#000"/><path transform="translate(1417.8 919.7) rotate(0)" d="M0 1.6H5L5.4 3.6L8.6 5.6L6.8 6.8L6.6 9.8L4.6 7.6L2.6 5.4L0.6 4.4Z" fill="#2cf41a"/><circle cx="1417.8" cy="932.1" r="5" fill="#c8c800"/><circle cx="1417.8" cy="932.1" r="1.9" fill="#000"/><path transform="translate(1417.8 932.1) rotate(0)" d="M0 1.6H5L5.4 3.6L8.6 5.6L6.8 6.8L6.6 9.8L4.6 7.6L2.6 5.4L0.6 4.4Z" fill="#2cf41a"/><circle cx="1417.8" cy="944.6" r="5" fill="#c8c800"/><circle cx="1417.8" cy="944.6" r="1.9" fill="#000"/><path transform="translate(1417.8 944.6) rotate(0)" d="M0 1.6H5L5.4 3.6L8.6 5.6L6.8 6.8L6.6 9.8L4.6 7.6L2.6 5.4L0.6 4.4Z" fill="#2cf41a"/><circle cx="1417.8" cy="957.1" r="5" fill="#c8c800"/><circle cx="1417.8" cy="957.1" r="1.9" fill="#000"/><path transform="translate(1417.8 957.1) rotate(0)" d="M0 1.6H5L5.4 3.6L8.6 5.6L6.8 6.8L6.6 9.8L4.6 7.6L2.6 5.4L0.6 4.4Z" fill="#2cf41a"/><circle cx="1417.8" cy="969.5" r="5" fill="#c8c800"/><circle cx="1417.8" cy="969.5" r="1.9" fill="#000"/><path transform="translate(1417.8 969.5) rotate(0)" d="M0 1.6H5L5.4 3.6L8.6 5.6L6.8 6.8L6.6 9.8L4.6 7.6L2.6 5.4L0.6 4.4Z" fill="#2cf41a"/><circle cx="1417.8" cy="982.0" r="5" fill="#c8c800"/><circle cx="1417.8" cy="982.0" r="1.9" fill="#000"/><path transform="translate(1417.8 982.0) rotate(0)" d="M0 1.6H5L5.4 3.6L8.6 5.6L6.8 6.8L6.6 9.8L4.6 7.6L2.6 5.4L0.6 4.4Z" fill="#2cf41a"/><text transform="translate(1460 998) rotate(0) scale(-1 1)" font-family="Liberation Mono,monospace" font-size="8" fill="#000084" textLength="85" lengthAdjust="spacingAndGlyphs">FireBeetle_2_ESP32_S3</text><rect x="956.5" y="1029.5" width="18.5" height="105.0" fill="none" stroke="#8c8c8c" stroke-width="1" /><rect x="959.5" y="1032.5" width="12.0" height="99.5" fill="none" stroke="#000084" stroke-width="0.9" /><rect x="959.7" y="1034.1" width="11.6" height="10.8" fill="#c8c800"/><circle cx="965.5" cy="1039.5" r="1.9" fill="#000"/><path transform="translate(965.5 1039.5) rotate(0)" d="M0 1.6H5L5.4 3.6L8.6 5.6L6.8 6.8L6.6 9.8L4.6 7.6L2.6 5.4L0.6 4.4Z" fill="#2cf41a"/><circle cx="965.5" cy="1051.9" r="5" fill="#c8c800"/><circle cx="965.5" cy="1051.9" r="1.9" fill="#000"/><path transform="translate(965.5 1051.9) rotate(0)" d="M0 1.6H5L5.4 3.6L8.6 5.6L6.8 6.8L6.6 9.8L4.6 7.6L2.6 5.4L0.6 4.4Z" fill="#2cf41a"/><circle cx="965.5" cy="1064.2" r="5" fill="#c8c800"/><circle cx="965.5" cy="1064.2" r="1.9" fill="#000"/><path transform="translate(965.5 1064.2) rotate(0)" d="M0 1.6H5L5.4 3.6L8.6 5.6L6.8 6.8L6.6 9.8L4.6 7.6L2.6 5.4L0.6 4.4Z" fill="#2cf41a"/><circle cx="965.5" cy="1076.6" r="5" fill="#c8c800"/><circle cx="965.5" cy="1076.6" r="1.9" fill="#000"/><path transform="translate(965.5 1076.6) rotate(0)" d="M0 1.6H5L5.4 3.6L8.6 5.6L6.8 6.8L6.6 9.8L4.6 7.6L2.6 5.4L0.6 4.4Z" fill="#2cf41a"/><circle cx="965.5" cy="1089.0" r="5" fill="#c8c800"/><circle cx="965.5" cy="1089.0" r="1.9" fill="#000"/><path transform="translate(965.5 1089.0) rotate(0)" d="M0 1.6H5L5.4 3.6L8.6 5.6L6.8 6.8L6.6 9.8L4.6 7.6L2.6 5.4L0.6 4.4Z" fill="#2cf41a"/><circle cx="965.5" cy="1101.3" r="5" fill="#c8c800"/><circle cx="965.5" cy="1101.3" r="1.9" fill="#000"/><path transform="translate(965.5 1101.3) rotate(0)" d="M0 1.6H5L5.4 3.6L8.6 5.6L6.8 6.8L6.6 9.8L4.6 7.6L2.6 5.4L0.6 4.4Z" fill="#2cf41a"/><circle cx="965.5" cy="1113.7" r="5" fill="#c8c800"/><circle cx="965.5" cy="1113.7" r="1.9" fill="#000"/><path transform="translate(965.5 1113.7) rotate(0)" d="M0 1.6H5L5.4 3.6L8.6 5.6L6.8 6.8L6.6 9.8L4.6 7.6L2.6 5.4L0.6 4.4Z" fill="#2cf41a"/><circle cx="965.5" cy="1126.1" r="5" fill="#c8c800"/><circle cx="965.5" cy="1126.1" r="1.9" fill="#000"/><path transform="translate(965.5 1126.1) rotate(0)" d="M0 1.6H5L5.4 3.6L8.6 5.6L6.8 6.8L6.6 9.8L4.6 7.6L2.6 5.4L0.6 4.4Z" fill="#2cf41a"/><text transform="translate(996 1141) rotate(0) scale(-1 1)" font-family="Liberation Mono,monospace" font-size="8" fill="#000084" textLength="62" lengthAdjust="spacingAndGlyphs">Beetle_ESP32_C3</text><text transform="translate(964.5 1086) rotate(90) scale(-1 1)" font-family="Liberation Mono,monospace" font-size="6" fill="#000084" textLength="8" lengthAdjust="spacingAndGlyphs">E3</text><rect x="1039" y="1029.5" width="18.5" height="105.0" fill="none" stroke="#8c8c8c" stroke-width="1" /><rect x="1042" y="1032.5" width="12" height="99.5" fill="none" stroke="#000084" stroke-width="0.9" /><rect x="1042.2" y="1034.1" width="11.6" height="10.8" fill="#c8c800"/><circle cx="1048.0" cy="1039.5" r="1.9" fill="#000"/><path transform="translate(1048.0 1039.5) rotate(0)" d="M0 1.6H5L5.4 3.6L8.6 5.6L6.8 6.8L6.6 9.8L4.6 7.6L2.6 5.4L0.6 4.4Z" fill="#2cf41a"/><circle cx="1048.0" cy="1051.9" r="5" fill="#c8c800"/><circle cx="1048.0" cy="1051.9" r="1.9" fill="#000"/><path transform="translate(1048.0 1051.9) rotate(0)" d="M0 1.6H5L5.4 3.6L8.6 5.6L6.8 6.8L6.6 9.8L4.6 7.6L2.6 5.4L0.6 4.4Z" fill="#2cf41a"/><circle cx="1048.0" cy="1064.2" r="5" fill="#c8c800"/><circle cx="1048.0" cy="1064.2" r="1.9" fill="#000"/><path transform="translate(1048.0 1064.2) rotate(0)" d="M0 1.6H5L5.4 3.6L8.6 5.6L6.8 6.8L6.6 9.8L4.6 7.6L2.6 5.4L0.6 4.4Z" fill="#2cf41a"/><circle cx="1048.0" cy="1076.6" r="5" fill="#c8c800"/><circle cx="1048.0" cy="1076.6" r="1.9" fill="#000"/><path transform="translate(1048.0 1076.6) rotate(0)" d="M0 1.6H5L5.4 3.6L8.6 5.6L6.8 6.8L6.6 9.8L4.6 7.6L2.6 5.4L0.6 4.4Z" fill="#2cf41a"/><circle cx="1048.0" cy="1089.0" r="5" fill="#c8c800"/><circle cx="1048.0" cy="1089.0" r="1.9" fill="#000"/><path transform="translate(1048.0 1089.0) rotate(0)" d="M0 1.6H5L5.4 3.6L8.6 5.6L6.8 6.8L6.6 9.8L4.6 7.6L2.6 5.4L0.6 4.4Z" fill="#2cf41a"/><circle cx="1048.0" cy="1101.3" r="5" fill="#c8c800"/><circle cx="1048.0" cy="1101.3" r="1.9" fill="#000"/><path transform="translate(1048.0 1101.3) rotate(0)" d="M0 1.6H5L5.4 3.6L8.6 5.6L6.8 6.8L6.6 9.8L4.6 7.6L2.6 5.4L0.6 4.4Z" fill="#2cf41a"/><circle cx="1048.0" cy="1113.7" r="5" fill="#c8c800"/><circle cx="1048.0" cy="1113.7" r="1.9" fill="#000"/><path transform="translate(1048.0 1113.7) rotate(0)" d="M0 1.6H5L5.4 3.6L8.6 5.6L6.8 6.8L6.6 9.8L4.6 7.6L2.6 5.4L0.6 4.4Z" fill="#2cf41a"/><circle cx="1048.0" cy="1126.1" r="5" fill="#c8c800"/><circle cx="1048.0" cy="1126.1" r="1.9" fill="#000"/><path transform="translate(1048.0 1126.1) rotate(0)" d="M0 1.6H5L5.4 3.6L8.6 5.6L6.8 6.8L6.6 9.8L4.6 7.6L2.6 5.4L0.6 4.4Z" fill="#2cf41a"/><text transform="translate(1079 1141) rotate(0) scale(-1 1)" font-family="Liberation Mono,monospace" font-size="8" fill="#000084" textLength="62" lengthAdjust="spacingAndGlyphs">Beetle_ESP32_C3</text><text transform="translate(1047 1086) rotate(90) scale(-1 1)" font-family="Liberation Mono,monospace" font-size="6" fill="#000084" textLength="8" lengthAdjust="spacingAndGlyphs">E3</text><circle cx="838.8" cy="872.0" r="5.7" fill="#c8c800"/><circle cx="838.8" cy="872.0" r="3.3" fill="#000"/><path transform="translate(838.8 872.0) rotate(0)" d="M0 1.6H5L5.4 3.6L8.6 5.6L6.8 6.8L6.6 9.8L4.6 7.6L2.6 5.4L0.6 4.4Z" fill="#2cf41a"/><circle cx="838.8" cy="893.0" r="5.7" fill="#c8c800"/><circle cx="838.8" cy="893.0" r="3.3" fill="#000"/><path transform="translate(838.8 893.0) rotate(0)" d="M0 1.6H5L5.4 3.6L8.6 5.6L6.8 6.8L6.6 9.8L4.6 7.6L2.6 5.4L0.6 4.4Z" fill="#2cf41a"/><circle cx="838.8" cy="943.0" r="5.7" fill="#c8c800"/><circle cx="838.8" cy="943.0" r="3.3" fill="#000"/><path transform="translate(838.8 943.0) rotate(0)" d="M0 1.6H5L5.4 3.6L8.6 5.6L6.8 6.8L6.6 9.8L4.6 7.6L2.6 5.4L0.6 4.4Z" fill="#2cf41a"/><circle cx="838.8" cy="964.5" r="5.7" fill="#c8c800"/><circle cx="838.8" cy="964.5" r="3.3" fill="#000"/><path transform="translate(838.8 964.5) rotate(0)" d="M0 1.6H5L5.4 3.6L8.6 5.6L6.8 6.8L6.6 9.8L4.6 7.6L2.6 5.4L0.6 4.4Z" fill="#2cf41a"/><rect x="869.2" y="866.4" width="11.6" height="11.2" fill="#c8c800"/><circle cx="875" cy="872" r="3.3" fill="#000"/><path transform="translate(875.0 872.0) rotate(0)" d="M0 1.6H5L5.4 3.6L8.6 5.6L6.8 6.8L6.6 9.8L4.6 7.6L2.6 5.4L0.6 4.4Z" fill="#2cf41a"/><circle cx="875.0" cy="893.0" r="5.7" fill="#c8c800"/><circle cx="875.0" cy="893.0" r="3.3" fill="#000"/><path transform="translate(875.0 893.0) rotate(0)" d="M0 1.6H5L5.4 3.6L8.6 5.6L6.8 6.8L6.6 9.8L4.6 7.6L2.6 5.4L0.6 4.4Z" fill="#2cf41a"/><rect x="869.2" y="937.4" width="11.6" height="11.2" fill="#c8c800"/><circle cx="875" cy="943" r="3.3" fill="#000"/><path transform="translate(875.0 943.0) rotate(0)" d="M0 1.6H5L5.4 3.6L8.6 5.6L6.8 6.8L6.6 9.8L4.6 7.6L2.6 5.4L0.6 4.4Z" fill="#2cf41a"/><circle cx="875.0" cy="964.5" r="5.7" fill="#c8c800"/><circle cx="875.0" cy="964.5" r="3.3" fill="#000"/><path transform="translate(875.0 964.5) rotate(0)" d="M0 1.6H5L5.4 3.6L8.6 5.6L6.8 6.8L6.6 9.8L4.6 7.6L2.6 5.4L0.6 4.4Z" fill="#2cf41a"/><path d="M957.5 644.4L970.6 657.3L914.0 713.0L901.2 700.0Z" fill="none" stroke="#8c8c8c" stroke-width="1"/><path d="M957.5 648.2L965.4 656.0L913.0 709.4L904.6 700.8Z" fill="none" stroke="#000084" stroke-width="0.9"/><circle cx="913.4" cy="700.3" r="5" fill="#c8c800"/><circle cx="913.4" cy="700.3" r="1.9" fill="#000"/><path transform="translate(913.4 700.3) rotate(0)" d="M0 1.6H5L5.4 3.6L8.6 5.6L6.8 6.8L6.6 9.8L4.6 7.6L2.6 5.4L0.6 4.4Z" fill="#2cf41a"/><circle cx="922.2" cy="691.5" r="5" fill="#c8c800"/><circle cx="922.2" cy="691.5" r="1.9" fill="#000"/><path transform="translate(922.2 691.5) rotate(0)" d="M0 1.6H5L5.4 3.6L8.6 5.6L6.8 6.8L6.6 9.8L4.6 7.6L2.6 5.4L0.6 4.4Z" fill="#2cf41a"/><circle cx="931.0" cy="682.7" r="5" fill="#c8c800"/><circle cx="931.0" cy="682.7" r="1.9" fill="#000"/><path transform="translate(931.0 682.7) rotate(0)" d="M0 1.6H5L5.4 3.6L8.6 5.6L6.8 6.8L6.6 9.8L4.6 7.6L2.6 5.4L0.6 4.4Z" fill="#2cf41a"/><circle cx="939.9" cy="673.8" r="5" fill="#c8c800"/><circle cx="939.9" cy="673.8" r="1.9" fill="#000"/><path transform="translate(939.9 673.8) rotate(0)" d="M0 1.6H5L5.4 3.6L8.6 5.6L6.8 6.8L6.6 9.8L4.6 7.6L2.6 5.4L0.6 4.4Z" fill="#2cf41a"/><circle cx="948.7" cy="665.0" r="5" fill="#c8c800"/><circle cx="948.7" cy="665.0" r="1.9" fill="#000"/><path transform="translate(948.7 665.0) rotate(0)" d="M0 1.6H5L5.4 3.6L8.6 5.6L6.8 6.8L6.6 9.8L4.6 7.6L2.6 5.4L0.6 4.4Z" fill="#2cf41a"/><rect x="951.7" y="650.8" width="11.6" height="10.8" fill="#c8c800" transform="rotate(45 957.5 656.2)"/><circle cx="957.5" cy="656.2" r="1.9" fill="#000"/><path transform="translate(957.5 656.2) rotate(0)" d="M0 1.6H5L5.4 3.6L8.6 5.6L6.8 6.8L6.6 9.8L4.6 7.6L2.6 5.4L0.6 4.4Z" fill="#2cf41a"/><text transform="translate(923 730) rotate(45) scale(-1 1)" font-family="Liberation Mono,monospace" font-size="7.5" fill="#000084" textLength="56" lengthAdjust="spacingAndGlyphs">sensor_MLX_221</text><path d="M1378.8 1061.0L1468.8 1150.0L1405.0 1213.8L1314.5 1123.8Z" fill="none" stroke="#8c8c8c" stroke-width="1"/><path d="M1378.75 1065L1416.25 1100L1352.5 1160L1316.25 1123.75ZM1396.25 1117.5L1412.5 1135L1390 1157.5L1371.25 1141.25M1412.5 1136.25L1447.5 1171.25L1426.25 1191.25L1390 1157.5" fill="none" stroke="#000084" stroke-width="0.9"/><rect x="1381" y="1092.5" width="14" height="14" fill="#c8c800" transform="rotate(45 1388 1099.5)"/><rect x="1383" y="1094.5" width="10" height="10" fill="none" stroke="#e6e67a" stroke-width="0.7" transform="rotate(45 1388 1099.5)"/><circle cx="1388" cy="1099.5" r="3" fill="#000"/><path transform="translate(1380.0 1098.0) rotate(0)" d="M0 1.6H5L5.4 3.6L8.6 5.6L6.8 6.8L6.6 9.8L4.6 7.6L2.6 5.4L0.6 4.4Z" fill="#2cf41a"/><circle cx="1370" cy="1116" r="8" fill="#c8c800"/><circle cx="1370" cy="1116" r="3.2" fill="#000"/><path transform="translate(1371.0 1116.0) rotate(0)" d="M0 1.6H5L5.4 3.6L8.6 5.6L6.8 6.8L6.6 9.8L4.6 7.6L2.6 5.4L0.6 4.4Z" fill="#2cf41a"/><circle cx="1353" cy="1134.5" r="8" fill="#c8c800"/><circle cx="1353" cy="1134.5" r="3.2" fill="#000"/><path transform="translate(1354.0 1134.0) rotate(0)" d="M0 1.6H5L5.4 3.6L8.6 5.6L6.8 6.8L6.6 9.8L4.6 7.6L2.6 5.4L0.6 4.4Z" fill="#2cf41a"/><text transform="translate(1386.5 1060.5) rotate(225) scale(-1 1)" font-family="Liberation Mono,monospace" font-size="7.5" fill="#000084" textLength="53" lengthAdjust="spacingAndGlyphs">potentiometer</text><text transform="translate(1362.5 1106) rotate(45) scale(-1 1)" font-family="Liberation Mono,monospace" font-size="5" fill="#000084">R</text><rect x="1150.5" y="1202.5" width="53.0" height="74.0" fill="none" stroke="#8c8c8c" stroke-width="1" /><rect x="1158.5" y="1210.5" width="44.0" height="64.0" fill="none" stroke="#000084" stroke-width="0.9" /><path d="M1158.5 1258H1202.5" stroke="#000084" stroke-width="0.9"/><rect x="1168.8" y="1202.55" width="24" height="12.5" rx="6.2" fill="#c8c800"/><rect x="1173.8" y="1206.6" width="13.9" height="4.4" rx="2.2" fill="#000"/><rect x="1150.75" y="1210.5" width="12.5" height="24" rx="6.2" fill="#c8c800"/><rect x="1154.8" y="1215.5" width="4.4" height="13.9" rx="2.2" fill="#000"/><rect x="1168.8" y="1231.75" width="24" height="12.5" rx="6.2" fill="#c8c800"/><rect x="1173.8" y="1235.8" width="13.9" height="4.4" rx="2.2" fill="#000"/><path transform="translate(1184.0 1206.0) rotate(0)" d="M0 1.6H5L5.4 3.6L8.6 5.6L6.8 6.8L6.6 9.8L4.6 7.6L2.6 5.4L0.6 4.4Z" fill="#2cf41a"/><path transform="translate(1157.0 1228.0) rotate(0)" d="M0 1.6H5L5.4 3.6L8.6 5.6L6.8 6.8L6.6 9.8L4.6 7.6L2.6 5.4L0.6 4.4Z" fill="#2cf41a"/><path transform="translate(1184.0 1236.0) rotate(0)" d="M0 1.6H5L5.4 3.6L8.6 5.6L6.8 6.8L6.6 9.8L4.6 7.6L2.6 5.4L0.6 4.4Z" fill="#2cf41a"/><text transform="translate(1145 1221) rotate(270) scale(-1 1)" font-family="Liberation Mono,monospace" font-size="8" fill="#000084" textLength="41" lengthAdjust="spacingAndGlyphs">power_jack</text><text transform="translate(1211.5 1238.5) rotate(270) scale(-1 1)" font-family="Liberation Mono,monospace" font-size="7" fill="#000084" textLength="8" lengthAdjust="spacingAndGlyphs">P1</text><rect x="1161.5" y="164.5" width="32.0" height="32.0" fill="none" stroke="#8c8c8c" stroke-width="1" /><circle cx="1177" cy="180.6" r="13.7" fill="none" stroke="#000084" stroke-width="0.9"/><circle cx="1177" cy="180.6" r="11.8" fill="none" stroke="#000084" stroke-width="0.9"/><rect x="1165" y="175.6" width="25.6" height="10" rx="3" fill="#c8c800"/><circle cx="1168" cy="181" r="2" fill="#000"/><circle cx="1174" cy="181" r="2" fill="#000"/><circle cx="1180" cy="181" r="2" fill="#000"/><circle cx="1186" cy="181" r="2" fill="#000"/><path transform="translate(1167.0 181.5) rotate(0)" d="M0 1.6H5L5.4 3.6L8.6 5.6L6.8 6.8L6.6 9.8L4.6 7.6L2.6 5.4L0.6 4.4Z" fill="#2cf41a"/><path transform="translate(1186.0 181.0) rotate(0)" d="M0 1.6H5L5.4 3.6L8.6 5.6L6.8 6.8L6.6 9.8L4.6 7.6L2.6 5.4L0.6 4.4Z" fill="#2cf41a"/><text transform="translate(1182 164) rotate(0) scale(-1 1)" font-family="Liberation Mono,monospace" font-size="7" fill="#1a3cc8" textLength="8" lengthAdjust="spacingAndGlyphs">D1</text><text x="1161" y="204.5" font-family="Liberation Mono,monospace" font-size="9" fill="#9a9a9a" textLength="31" lengthAdjust="spacingAndGlyphs">LED_RAG</text><rect x="1033.5" y="1053.5" width="1.6" height="1.6" fill="#c88a1e"/><rect x="1104.5" y="1123.5" width="1.6" height="1.6" fill="#c88a1e"/><path d="M1052 320.5H1132M1092.5 280V360" stroke="#8c8c8c" stroke-width="1" shape-rendering="crispEdges"/></svg></div>
</body></html>
